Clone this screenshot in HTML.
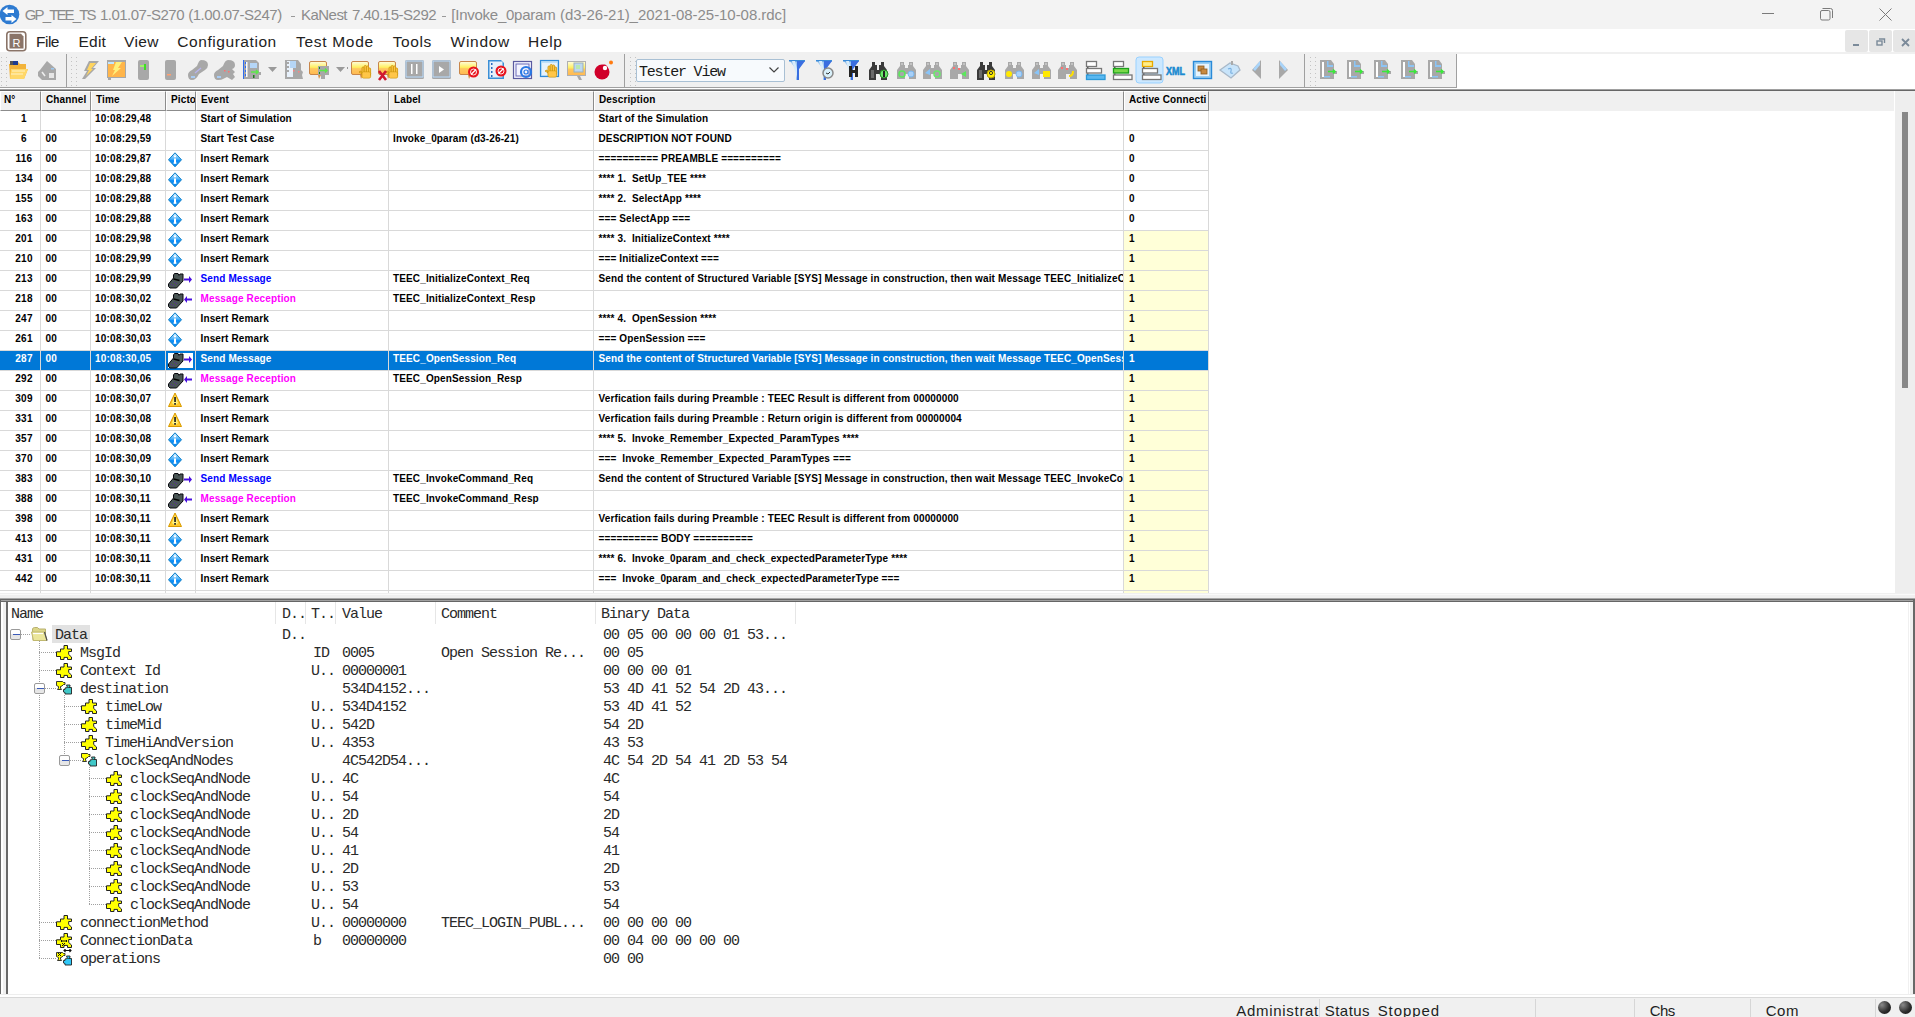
<!DOCTYPE html><html><head><meta charset="utf-8"><style>
*{box-sizing:border-box;margin:0;padding:0}
html,body{width:1915px;height:1017px;overflow:hidden;background:#fff}
body{position:relative;font-family:"Liberation Sans",sans-serif}
.a{position:absolute}
.t{position:absolute;white-space:pre;line-height:1}
.tb{font-weight:bold;font-size:10px;color:#000}
.tm{letter-spacing:0.22px}
.ls{letter-spacing:0.13px}
.mono{position:absolute;white-space:pre;line-height:1;font-family:"Liberation Mono",monospace;font-size:15px;letter-spacing:-1px;color:#2a2a2a}
</style></head><body>
<div class="a" style="left:0;top:0;width:1915px;height:29px;background:#f3f3f3"></div>
<svg class="a" style="left:0;top:4px" width="20" height="21" viewBox="0 0 20 21"><circle cx="9.5" cy="10.5" r="9.8" fill="#2e7bd1"/><path d="M2.5 7 L7.5 3 V5.5 H14 V9 H7.5 V11 Z" fill="#fff"/><path d="M16.5 15 L11.5 19 V16.5 H5.5 V13 H11.5 V11 Z" fill="#fff"/></svg>
<div class="t" style="left:24.7px;top:7.3px;font-size:15px;letter-spacing:-1.856px;color:#8c8c8c">GP_TEE_TS</div>
<div class="t" style="left:99.9px;top:7.3px;font-size:15px;letter-spacing:-0.498px;color:#8c8c8c">1.01.07-S270</div>
<div class="t" style="left:188.2px;top:7.3px;font-size:15px;letter-spacing:-0.470px;color:#8c8c8c">(1.00.07-S247)</div>
<div class="a" style="left:291.4px;top:16px;width:4px;height:1px;background:#999"></div>
<div class="t" style="left:301.1px;top:7.3px;font-size:15px;letter-spacing:-0.551px;color:#8c8c8c">KaNest</div>
<div class="t" style="left:351.9px;top:7.3px;font-size:15px;letter-spacing:-0.482px;color:#8c8c8c">7.40.15-S292</div>
<div class="a" style="left:442.3px;top:16px;width:4px;height:1px;background:#999"></div>
<div class="t" style="left:451.3px;top:7.3px;font-size:15px;letter-spacing:-0.248px;color:#8c8c8c">[Invoke_0param</div>
<div class="t" style="left:560.1px;top:7.3px;font-size:15px;letter-spacing:-0.051px;color:#8c8c8c">(d3-26-21)_2021-08-25-10-08.rdc]</div>
<div class="a" style="left:1762px;top:13px;width:12px;height:1px;background:#7a7a7a"></div>
<svg class="a" style="left:1819px;top:7px" width="15" height="15" viewBox="0 0 15 15"><rect x="1.5" y="3.5" width="9.5" height="9.5" rx="1.5" fill="none" stroke="#7a7a7a" stroke-width="1"/><path d="M3.5 1.5 H11.5 Q13.5 1.5 13.5 3.5 V11" fill="none" stroke="#7a7a7a" stroke-width="1"/></svg>
<svg class="a" style="left:1878px;top:7px" width="15" height="15" viewBox="0 0 15 15"><path d="M1.5 1.5 L13.5 13.5 M13.5 1.5 L1.5 13.5" stroke="#7a7a7a" stroke-width="1"/></svg>
<div class="a" style="left:0;top:29px;width:1915px;height:23px;background:#fff"></div>
<svg class="a" style="left:6px;top:31px" width="21" height="21" viewBox="0 0 21 21"><rect x="0.8" y="0.8" width="19" height="19" rx="3" fill="#fff" stroke="#8a7468" stroke-width="1.6"/><path d="M3.5 2.8 H15 L17.5 5.5 V17.5 H3.5 Z" fill="#8a7468"/><text x="10.5" y="15.5" font-family="Liberation Sans" font-size="11" fill="#fff" text-anchor="middle">R</text></svg>
<div class="t" style="left:36px;top:33.5px;font-size:15.5px;letter-spacing:-0.496px;color:#222">File</div>
<div class="t" style="left:78.6px;top:33.5px;font-size:15.5px;letter-spacing:0.170px;color:#222">Edit</div>
<div class="t" style="left:124px;top:33.5px;font-size:15.5px;letter-spacing:0.368px;color:#222">View</div>
<div class="t" style="left:177.3px;top:33.5px;font-size:15.5px;letter-spacing:0.561px;color:#222">Configuration</div>
<div class="t" style="left:296px;top:33.5px;font-size:15.5px;letter-spacing:0.698px;color:#222">Test Mode</div>
<div class="t" style="left:392.7px;top:33.5px;font-size:15.5px;letter-spacing:0.583px;color:#222">Tools</div>
<div class="t" style="left:450.6px;top:33.5px;font-size:15.5px;letter-spacing:0.710px;color:#222">Window</div>
<div class="t" style="left:528px;top:33.5px;font-size:15.5px;letter-spacing:0.702px;color:#222">Help</div>
<div class="a" style="left:1845px;top:30px;width:23px;height:22px;background:#e6e6e6;border-radius:2px"></div>
<div class="a" style="left:1869px;top:30px;width:23px;height:22px;background:#e6e6e6;border-radius:2px"></div>
<div class="a" style="left:1893px;top:30px;width:23px;height:22px;background:#e6e6e6;border-radius:2px"></div>
<div class="a" style="left:1853px;top:44px;width:6px;height:2px;background:#7b8a99"></div>
<svg class="a" style="left:1876px;top:37px" width="10" height="10" viewBox="0 0 10 10"><rect x="1" y="4" width="5" height="4" fill="none" stroke="#7b8a99" stroke-width="1.4"/><path d="M3 2 H8.5 V6" fill="none" stroke="#7b8a99" stroke-width="1.4"/></svg>
<svg class="a" style="left:1901px;top:38px" width="9" height="9" viewBox="0 0 9 9"><path d="M1 1 L8 8 M8 1 L1 8" stroke="#7b8a99" stroke-width="1.8"/></svg>
<div class="a" style="left:0;top:52px;width:1915px;height:2px;background:#f0f0f0"></div>
<div class="a" style="left:0;top:54px;width:1457px;height:34px;background:#f0f0f0;border-bottom:1px solid #a0a0a0"></div>
<div class="a" style="left:1456px;top:54px;width:1px;height:33px;background:#a0a0a0"></div>
<div class="a" style="left:66px;top:54px;width:1px;height:33px;background:#a0a0a0"></div>
<div class="a" style="left:624px;top:54px;width:1px;height:33px;background:#a0a0a0"></div>
<div class="a" style="left:1304px;top:54px;width:1px;height:33px;background:#a0a0a0"></div>
<div class="a" style="left:0px;top:56px;width:2px;height:30px;background:repeating-linear-gradient(transparent 0 1px,#c4c4c4 1px 2px,transparent 2px 4px);clip-path:inset(0 0 0 1px)"></div>
<div class="a" style="left:5px;top:56px;width:2px;height:30px;background:repeating-linear-gradient(transparent 0 1px,#c4c4c4 1px 2px,transparent 2px 4px);clip-path:inset(0 0 0 1px)"></div>
<div class="a" style="left:70px;top:56px;width:2px;height:30px;background:repeating-linear-gradient(transparent 0 1px,#c4c4c4 1px 2px,transparent 2px 4px);clip-path:inset(0 0 0 1px)"></div>
<div class="a" style="left:75px;top:56px;width:2px;height:30px;background:repeating-linear-gradient(transparent 0 1px,#c4c4c4 1px 2px,transparent 2px 4px);clip-path:inset(0 0 0 1px)"></div>
<div class="a" style="left:629px;top:56px;width:2px;height:30px;background:repeating-linear-gradient(transparent 0 1px,#c4c4c4 1px 2px,transparent 2px 4px);clip-path:inset(0 0 0 1px)"></div>
<div class="a" style="left:634px;top:56px;width:2px;height:30px;background:repeating-linear-gradient(transparent 0 1px,#c4c4c4 1px 2px,transparent 2px 4px);clip-path:inset(0 0 0 1px)"></div>
<div class="a" style="left:1309px;top:56px;width:2px;height:30px;background:repeating-linear-gradient(transparent 0 1px,#c4c4c4 1px 2px,transparent 2px 4px);clip-path:inset(0 0 0 1px)"></div>
<div class="a" style="left:1314px;top:56px;width:2px;height:30px;background:repeating-linear-gradient(transparent 0 1px,#c4c4c4 1px 2px,transparent 2px 4px);clip-path:inset(0 0 0 1px)"></div>
<svg class="a" style="left:0;top:0" width="1460" height="90" viewBox="0 0 1460 90"><defs><linearGradient id="ygrad" x1="0" y1="0" x2="0" y2="1"><stop offset="0" stop-color="#fffde0"/><stop offset="0.45" stop-color="#fff060"/><stop offset="0.55" stop-color="#ffc860"/><stop offset="1" stop-color="#ffb850"/></linearGradient></defs><g transform="translate(9,60)"><path d="M0 4 H3 V2 H9 L11 4 H17 V9 H19 L15 19 H1 Z" fill="#f2b33a"/>
<path d="M2 9 H19 L15 19 H1 Z" fill="#ffd86a"/><rect x="1" y="1" width="3" height="4" fill="#555"/><rect x="4" y="1" width="5" height="4" fill="#1d3b8f"/>
<path d="M3 11 H16 M2 14 H14" stroke="#ffe9a8" stroke-width="1.5"/></g><g transform="translate(37,60)"><path d="M10 1 L19 9 V20 H5 L1 16 V12 L3 10 Z" fill="#a8a8a8"/><rect x="12" y="13" width="5" height="5" fill="#e6e6e6"/><path d="M5 12 L8 16" stroke="#eee" stroke-width="1.5"/><rect x="14" y="8" width="3" height="1.5" fill="#9cc8f0"/></g><g transform="translate(81,60)"><path d="M8 1 H18 L12 8 H15 L4 19 H1 L6 11 H3 Z" fill="#a8a8a8"/><path d="M9 3 H15 L10 9 H12 L5 16 L8 10 H6 Z" fill="#ffd45e"/></g><g transform="translate(107,60)"><rect x="0" y="0" width="19" height="18" fill="#a8a8a8"/><rect x="1" y="2" width="17" height="15" fill="#ffb54a"/><rect x="1" y="2" width="6" height="2" fill="#bfe6ff"/><path d="M9 2 H15 L11 8 H14 L5 16 L8 10 H6 Z" fill="#fff07a"/><rect x="1" y="18" width="3" height="2" fill="#a8a8a8"/></g><g transform="translate(138,60)"><rect x="0" y="0" width="11" height="20" rx="2" fill="#a8a8a8"/><rect x="2" y="5" width="4" height="2" fill="#9ef26a"/><rect x="6" y="4" width="2" height="6" fill="#3fdc24"/></g><g transform="translate(165,60)"><rect x="0" y="0" width="11" height="20" rx="2" fill="#a8a8a8"/><rect x="2" y="14" width="4" height="1.5" fill="#ff9e6e"/></g><g transform="translate(188,60)"><path d="M13 0 Q20 0 20 5 Q20 8 17 10 L11 14 Q8 20 4 20 Q0 20 0 15 Q0 12 4 10 L9 6 Q11 0 13 0 Z" fill="#a8a8a8"/><path d="M7 13 L13 8" stroke="#b8b4ee" stroke-width="1.3"/><rect x="3" y="16" width="4" height="2" fill="#a8ccf4"/></g><g transform="translate(214,60)"><path d="M14 0 Q21 0 21 5 Q21 8 18 9 L21 12 L19 14 L21 17 L18 20 L13 17 L9 19 Q8 20 4 20 Q0 20 0 15 Q0 12 4 10 L9 6 Q11 0 14 0 Z" fill="#a8a8a8"/><rect x="3" y="16" width="4" height="2" fill="#a8ccf4"/><rect x="10" y="10" width="1.5" height="1.5" fill="#ff7070"/><rect x="14" y="11" width="1.5" height="1.5" fill="#ff7070"/></g><g transform="translate(243,60)"><path d="M0 0 H13 L16 3 V19 H0 Z" fill="#a8a8a8"/><rect x="0" y="0" width="1" height="19" fill="#2f6cf0"/><rect x="3" y="2" width="1.5" height="15" fill="#fff"/><rect x="2" y="2" width="1" height="2" fill="#2f6cf0"/><rect x="2" y="6" width="1" height="2" fill="#2f6cf0"/><rect x="2" y="10" width="1" height="2" fill="#2f6cf0"/><rect x="2" y="14" width="1" height="2" fill="#2f6cf0"/><rect x="7" y="3" width="7" height="5" fill="#b5d6f7"/><path d="M8 12 H15 M13 10 L15 12 L13 14" stroke="#5ce84a" stroke-width="1.6" fill="none"/><rect x="16" y="12" width="2" height="3" fill="#a8a8a8"/><rect x="10" y="15" width="1.5" height="3" fill="#1a7a1a"/></g><g transform="translate(268,67)"><path d="M0 0 H9 L4.5 5 Z" fill="#9a9a9a"/></g><g transform="translate(285,60)"><path d="M0 0 H13 L16 4 V10 L18 12 L17 15 L18 19 H0 Z" fill="#a8a8a8"/><rect x="2" y="1" width="6" height="16" fill="#e8f1fb"/><rect x="2" y="2" width="2" height="2" fill="#a8a8a8"/><rect x="2" y="6" width="2" height="2" fill="#a8a8a8"/><rect x="2" y="10" width="2" height="2" fill="#a8a8a8"/><rect x="5" y="1" width="6" height="7" fill="#b5d6f7"/><rect x="8" y="10" width="1.5" height="1.5" fill="#ff8080"/><rect x="13" y="11" width="1.5" height="1.5" fill="#ff8080"/></g><g transform="translate(309,61)"><rect x="0.5" y="0.5" width="17" height="13" rx="1.5" fill="url(#ygrad)" stroke="#c8864a" stroke-width="1"/><path d="M9 14 L10 18 L12 14 Z" fill="#d8924a"/><rect x="9" y="5" width="11" height="9" fill="#a8a8a8"/><path d="M11 9.5 H18 M16 7.5 L18 9.5 L16 11.5" stroke="#5ce84a" stroke-width="1.4" fill="none"/><rect x="10" y="6" width="1" height="2" fill="#1a8a1a"/><rect x="10" y="11" width="1" height="2" fill="#1a8a1a"/><rect x="12" y="14" width="4" height="4" fill="#a8a8a8"/></g><g transform="translate(336,67)"><path d="M0 0 H9 L4.5 5 Z" fill="#9a9a9a"/></g><rect x="347" y="67" width="1" height="2" fill="#999"/><g transform="translate(351,61)"><rect x="0.5" y="0.5" width="17" height="13" rx="1.5" fill="url(#ygrad)" stroke="#c8864a" stroke-width="1"/><path d="M9 14 L10 18 L12 14 Z" fill="#d8924a"/><g stroke="#d09a10" stroke-width="0.9" fill="#ffc648"><path d="M8 11 L10 10 L11.5 13 Z"/><rect x="11" y="6" width="2.2" height="8" rx="1"/><rect x="13.2" y="4.5" width="2.2" height="9" rx="1"/><rect x="15.4" y="5" width="2.2" height="9" rx="1"/><rect x="17.6" y="7" width="2" height="7" rx="1"/><rect x="11" y="11" width="8.6" height="6" rx="1.5"/></g><rect x="11.8" y="11.5" width="7" height="5" fill="#ffc648"/></g><g transform="translate(378,61)"><rect x="0.5" y="0.5" width="17" height="13" rx="1.5" fill="url(#ygrad)" stroke="#c8864a" stroke-width="1"/><path d="M9 14 L10 18 L12 14 Z" fill="#d8924a"/><g stroke="#d09a10" stroke-width="0.9" fill="#ffc648"><path d="M8 11 L10 10 L11.5 13 Z"/><rect x="11" y="6" width="2.2" height="8" rx="1"/><rect x="13.2" y="4.5" width="2.2" height="9" rx="1"/><rect x="15.4" y="5" width="2.2" height="9" rx="1"/><rect x="17.6" y="7" width="2" height="7" rx="1"/><rect x="11" y="11" width="8.6" height="6" rx="1.5"/></g><rect x="11.8" y="11.5" width="7" height="5" fill="#ffc648"/><path d="M1 10 L8 19 M8 10 L1 19" stroke="#d01830" stroke-width="2.6"/></g><g transform="translate(405,60)"><rect x="0" y="0" width="19" height="19" rx="1.5" fill="#a8a8a8"/><rect x="1" y="1" width="17" height="16" fill="none" stroke="#b8dcff" stroke-width="1"/><rect x="6" y="4" width="1.5" height="10" fill="#fff"/><rect x="11" y="4" width="1.5" height="10" fill="#fff"/></g><g transform="translate(432,60)"><rect x="0" y="0" width="19" height="19" rx="1.5" fill="#a8a8a8"/><rect x="1" y="1" width="17" height="16" fill="none" stroke="#b8dcff" stroke-width="1"/><path d="M7 6 L12 9.5 L7 13 Z" fill="#fff"/></g><g transform="translate(459,61)"><rect x="0.5" y="0.5" width="17" height="13" rx="1.5" fill="url(#ygrad)" stroke="#c8864a" stroke-width="1"/><path d="M9 14 L10 18 L12 14 Z" fill="#d8924a"/><circle cx="14.5" cy="11" r="5.5" fill="#e8141e"/><path d="M12.0 13.5 L17.0 8.5" stroke="#fff" stroke-width="1.2"/><circle cx="14.5" cy="11" r="3" fill="none" stroke="#fff" stroke-width="0.9"/></g><g transform="translate(488,60)"><path d="M0 0 H13 L16 3 V19 H0 Z" fill="#3a8fd6"/><rect x="1.5" y="1.5" width="13" height="16" fill="#e4f0fb"/><rect x="3" y="3" width="1.5" height="2" fill="#2a6cc0"/><rect x="3" y="7" width="1.5" height="2" fill="#2a6cc0"/><rect x="3" y="11" width="1.5" height="2" fill="#2a6cc0"/><rect x="3" y="15" width="1.5" height="2" fill="#2a6cc0"/><circle cx="13" cy="11" r="5.5" fill="#e8141e"/><path d="M10.5 13.5 L15.5 8.5" stroke="#fff" stroke-width="1.2"/><circle cx="13" cy="11" r="3" fill="none" stroke="#fff" stroke-width="0.9"/></g><g transform="translate(513,60)"><rect x="0.5" y="1.5" width="18" height="17" fill="#f4f4ff" stroke="#5a5aa0" stroke-width="1.2"/><rect x="3" y="4" width="13" height="12" fill="none" stroke="#6a6ab8" stroke-width="1"/><circle cx="13" cy="12" r="5" fill="none" stroke="#2a78e4" stroke-width="2.2"/><circle cx="13" cy="12" r="2" fill="none" stroke="#2a78e4" stroke-width="1.2"/></g><g transform="translate(540,60)"><rect x="0.5" y="0.5" width="18" height="16" fill="#bfe0f8" stroke="#2f8ad8" stroke-width="1.2"/><rect x="2" y="3" width="15" height="12" fill="#e6f2fb"/><g stroke="#d09a10" stroke-width="0.9" fill="#ffc648"><path d="M5 11 L7 10 L8.5 13 Z"/><rect x="8" y="6" width="2.2" height="8" rx="1"/><rect x="10.2" y="4.5" width="2.2" height="9" rx="1"/><rect x="12.4" y="5" width="2.2" height="9" rx="1"/><rect x="14.6" y="7" width="2" height="7" rx="1"/><rect x="8" y="11" width="8.6" height="6" rx="1.5"/></g><rect x="8.8" y="11.5" width="7" height="5" fill="#ffc648"/></g><g transform="translate(567,61)"><rect x="0.5" y="0.5" width="18" height="14" fill="url(#ygrad)" stroke="#b0b0b0" stroke-width="1"/><rect x="7" y="2" width="9" height="9" fill="#bcd8f0" stroke="#9ab0c0" stroke-width="1"/><rect x="9" y="4" width="4" height="4" fill="#b8e8b0"/><path d="M10 15 L12 19 H15 L13 15 Z" fill="#a8a8a8"/></g><g transform="translate(594,60)"><circle cx="8" cy="12" r="7.5" fill="#d0002a"/><path d="M8 5 Q13 3 14 9" fill="#d0002a"/><circle cx="11" cy="8" r="2.2" fill="#fff"/><circle cx="17" cy="2.5" r="2" fill="#ff7a10"/></g><g transform="translate(789,60)"><path d="M0 0 H16 L10 9 V20 L7 20 V9 Z" fill="#9cc7f0"/><path d="M0 0 H16 V1.5 H0 Z" fill="#3a8ad8"/><path d="M8 1 H16 L10 9 V20 H8 Z" fill="#3a6ee0"/><path d="M3 1 H6 L8 9 V18 Z" fill="#d8ecfa"/></g><g transform="translate(816,60)"><path d="M0 0 H16 L10 9 V20 L7 20 V9 Z" fill="#9cc7f0"/><path d="M0 0 H16 V1.5 H0 Z" fill="#3a8ad8"/><path d="M8 1 H16 L10 9 V20 H8 Z" fill="#3a6ee0"/><path d="M3 1 H6 L8 9 V18 Z" fill="#d8ecfa"/><circle cx="12" cy="13" r="5" fill="#d8f0fa" stroke="#888" stroke-width="1.5"/><path d="M10 13 L12 14 L14 12" stroke="#333" stroke-width="1" fill="none"/></g><g transform="translate(843,60)"><path d="M0 0 H16 L10 9 V20 L7 20 V9 Z" fill="#9cc7f0"/><path d="M0 0 H16 V1.5 H0 Z" fill="#3a8ad8"/><path d="M8 1 H16 L10 9 V20 H8 Z" fill="#3a6ee0"/><path d="M3 1 H6 L8 9 V18 Z" fill="#d8ecfa"/><path d="M6 6 H9 V10 H12 V6 H15 V17 H12 V13 H9 V17 H6 Z" fill="#222"/></g><g transform="translate(869,62)"><path d="M3 0 H6 V3 H8 V8 H10 V3 H12 V0 H15 V4 L18 8 V18 H12 V12 H7 V18 H0 V8 L3 4 Z" fill="#3a3a3a"/><path d="M2 8 H5 V16 H2 Z" fill="#6a6a6a"/><path d="M13 8 H16 V14 H13 Z" fill="#707070"/><circle cx="15" cy="12" r="4" fill="#6ae86a" stroke="#2a8a2a" stroke-width="1"/><rect x="14" y="9" width="2" height="6" fill="#222"/></g><g transform="translate(897,62)"><path d="M3 0 H7 V3 H8 V6 H11 V3 H12 V0 H16 V4 L19 8 V17 H12 V12 H8 V17 H0 V8 L3 4 Z" fill="#a8a8a8"/><rect x="4" y="1.5" width="2" height="1" fill="#ddd"/><rect x="13" y="1.5" width="2" height="1" fill="#ddd"/><circle cx="5" cy="12" r="3" fill="none" stroke="#5ae85a" stroke-width="1.5"/><circle cx="14" cy="12" r="3" fill="#a8d0f8" stroke="#7ab8f0" stroke-width="1"/></g><g transform="translate(923,62)"><path d="M3 0 H7 V3 H8 V6 H11 V3 H12 V0 H16 V4 L19 8 V17 H12 V12 H8 V17 H0 V8 L3 4 Z" fill="#a8a8a8"/><rect x="4" y="1.5" width="2" height="1" fill="#ddd"/><rect x="13" y="1.5" width="2" height="1" fill="#ddd"/><path d="M2 11 L7 7 V13 Z" fill="#88c4f8"/><circle cx="14" cy="12" r="3" fill="none" stroke="#6ae86a" stroke-width="1.5"/></g><g transform="translate(950,62)"><path d="M3 0 H7 V3 H8 V6 H11 V3 H12 V0 H16 V4 L19 8 V17 H12 V12 H8 V17 H0 V8 L3 4 Z" fill="#a8a8a8"/><rect x="4" y="1.5" width="2" height="1" fill="#ddd"/><rect x="13" y="1.5" width="2" height="1" fill="#ddd"/><rect x="3" y="5" width="2" height="2" fill="#ff7070"/><rect x="8" y="6" width="2" height="2" fill="#ff7070"/><path d="M11 12 L16 9 V15 Z" fill="#5ae85a"/></g><g transform="translate(977,62)"><path d="M3 0 H6 V3 H8 V8 H10 V3 H12 V0 H15 V4 L18 8 V18 H12 V12 H7 V18 H0 V8 L3 4 Z" fill="#3a3a3a"/><path d="M2 8 H5 V16 H2 Z" fill="#6a6a6a"/><path d="M13 8 H16 V14 H13 Z" fill="#707070"/><circle cx="14" cy="12" r="4" fill="#ffee00" stroke="#b8a000" stroke-width="1"/><circle cx="14" cy="11" r="1.6" fill="none" stroke="#333" stroke-width="1"/></g><g transform="translate(1005,62)"><path d="M3 0 H7 V3 H8 V6 H11 V3 H12 V0 H16 V4 L19 8 V17 H12 V12 H8 V17 H0 V8 L3 4 Z" fill="#a8a8a8"/><rect x="4" y="1.5" width="2" height="1" fill="#ddd"/><rect x="13" y="1.5" width="2" height="1" fill="#ddd"/><circle cx="4" cy="12" r="3" fill="#ffe800"/><circle cx="14" cy="12" r="3" fill="#a8d0f8" stroke="#7ab8f0" stroke-width="1"/></g><g transform="translate(1032,62)"><path d="M3 0 H7 V3 H8 V6 H11 V3 H12 V0 H16 V4 L19 8 V17 H12 V12 H8 V17 H0 V8 L3 4 Z" fill="#a8a8a8"/><rect x="4" y="1.5" width="2" height="1" fill="#ddd"/><rect x="13" y="1.5" width="2" height="1" fill="#ddd"/><path d="M2 11 L7 7 V13 Z" fill="#88c4f8"/><rect x="11" y="9" width="7" height="6" fill="#ffe800"/></g><g transform="translate(1058,62)"><path d="M3 0 H7 V3 H8 V6 H11 V3 H12 V0 H16 V4 L19 8 V17 H12 V12 H8 V17 H0 V8 L3 4 Z" fill="#a8a8a8"/><rect x="4" y="1.5" width="2" height="1" fill="#ddd"/><rect x="13" y="1.5" width="2" height="1" fill="#ddd"/><rect x="3" y="5" width="2" height="2" fill="#ff7070"/><rect x="8" y="6" width="2" height="2" fill="#ff7070"/><path d="M11 14 Q15 14 15 9" stroke="#ffe000" stroke-width="2" fill="none"/></g><g transform="translate(1086,61)"><rect x="0.5" y="0.5" width="10" height="5" fill="#fff" stroke="#777" stroke-width="1.3"/><rect x="1" y="6" width="1.5" height="2" fill="#555"/><rect x="0.5" y="7.5" width="15" height="4.5" fill="#fff" stroke="#777" stroke-width="1.3"/><rect x="1" y="12.5" width="1.5" height="2" fill="#555"/><rect x="0.5" y="14" width="18.5" height="4.5" fill="#5ab8f0" stroke="#2a98d8" stroke-width="1.3"/></g><g transform="translate(1113,61)"><rect x="0.5" y="0.5" width="10" height="5" fill="#fff" stroke="#777" stroke-width="1.3"/><rect x="1" y="6" width="1.5" height="2" fill="#555"/><rect x="0.5" y="7.5" width="15" height="4.5" fill="#7ad84a" stroke="#1aa01a" stroke-width="1.3"/><rect x="1" y="12.5" width="1.5" height="2" fill="#555"/><rect x="0.5" y="14" width="18.5" height="4.5" fill="#fff" stroke="#777" stroke-width="1.3"/></g><g transform="translate(1142,61)"><rect x="-6" y="-4" width="27" height="26" rx="3" fill="#cce8ff" stroke="#99d1ff" stroke-width="1"/><rect x="0.5" y="0.5" width="10" height="5" fill="#ffee88" stroke="#e8a800" stroke-width="1.3"/><rect x="1" y="6" width="1.5" height="2" fill="#555"/><rect x="0.5" y="7.5" width="15" height="4.5" fill="#fff" stroke="#777" stroke-width="1.3"/><rect x="1" y="12.5" width="1.5" height="2" fill="#555"/><rect x="0.5" y="14" width="18.5" height="4.5" fill="#fff" stroke="#777" stroke-width="1.3"/></g><g transform="translate(1166,66)"><text x="0" y="8.5" font-family="Liberation Sans" font-weight="bold" font-size="11.5" fill="#1a8ad0" stroke="#1a8ad0" stroke-width="0.6" textLength="19" lengthAdjust="spacingAndGlyphs">XML</text></g><g transform="translate(1193,61)"><rect x="0.5" y="0.5" width="18" height="17" fill="#9cd0f4" stroke="#2a8ad8" stroke-width="1.4"/><rect x="3" y="3" width="13" height="12" fill="#e8f4fc"/><rect x="5" y="5" width="6" height="5" fill="#c88a40" stroke="#8a5a20" stroke-width="0.8"/><rect x="8" y="8" width="6" height="5" fill="#c88a40" stroke="#8a5a20" stroke-width="0.8"/></g><g transform="translate(1220,61)"><path d="M0 9 L10 2 L18 5 L20 9 L11 17 Z" fill="#c8e4fa" stroke="#a8b8c8" stroke-width="1.3"/><path d="M12 0 V4" stroke="#aaa" stroke-width="2"/><path d="M8 8 Q12 6 11 10 Q10 13 13 12" stroke="#7ab0e0" stroke-width="1.2" fill="none"/></g><g transform="translate(1252,60)"><path d="M9 0 V19 L0 10 Z" fill="#a8a8a8"/><path d="M8 1 L1 9 L3 11 L8 5 Z" fill="#a8d4fa"/></g><g transform="translate(1279,60)"><path d="M0 0 V19 L9 10 Z" fill="#a8a8a8"/><path d="M1 1 L8 9 L6 11 L1 5 Z" fill="#a8d4fa"/></g><g transform="translate(1320,60)"><path d="M0 0 H11 L14 4 V11 H17 V14 H14 V19 H0 Z" fill="#a8a8a8"/><rect x="2" y="2" width="2" height="15" fill="#fff"/><rect x="7" y="1" width="1.5" height="6" fill="#8cc4f4"/><rect x="8" y="5" width="5" height="2" fill="#8cc4f4"/><rect x="4" y="16" width="6" height="1.5" fill="#8cc4f4"/><path d="M8 11.5 H15 M13 9.5 L15 11.5 L13 13.5" stroke="#3ae83a" stroke-width="1.6" fill="none"/></g><g transform="translate(1347,60)"><path d="M0 0 H11 L14 4 V11 H17 V14 H14 V19 H0 Z" fill="#a8a8a8"/><rect x="2" y="2" width="2" height="15" fill="#fff"/><rect x="7" y="1" width="1.5" height="6" fill="#8cc4f4"/><rect x="8" y="5" width="5" height="2" fill="#8cc4f4"/><rect x="4" y="16" width="6" height="1.5" fill="#8cc4f4"/><path d="M8 11.5 H15 M13 9.5 L15 11.5 L13 13.5" stroke="#3ae83a" stroke-width="1.6" fill="none"/></g><g transform="translate(1374,60)"><path d="M0 0 H11 L14 4 V11 H17 V14 H14 V19 H0 Z" fill="#a8a8a8"/><rect x="2" y="2" width="2" height="15" fill="#fff"/><rect x="7" y="1" width="1.5" height="6" fill="#8cc4f4"/><rect x="8" y="5" width="5" height="2" fill="#8cc4f4"/><rect x="4" y="16" width="6" height="1.5" fill="#8cc4f4"/><path d="M8 11.5 H15 M13 9.5 L15 11.5 L13 13.5" stroke="#3ae83a" stroke-width="1.6" fill="none"/></g><g transform="translate(1401,60)"><path d="M0 0 H11 L14 4 V11 H17 V14 H14 V19 H0 Z" fill="#a8a8a8"/><rect x="2" y="2" width="2" height="15" fill="#fff"/><rect x="7" y="1" width="1.5" height="6" fill="#8cc4f4"/><rect x="8" y="5" width="5" height="2" fill="#8cc4f4"/><rect x="4" y="16" width="6" height="1.5" fill="#8cc4f4"/><path d="M8 11.5 H15 M13 9.5 L15 11.5 L13 13.5" stroke="#3ae83a" stroke-width="1.6" fill="none"/></g><g transform="translate(1428,60)"><path d="M0 0 H11 L14 4 V11 H17 V14 H14 V19 H0 Z" fill="#a8a8a8"/><rect x="2" y="2" width="2" height="15" fill="#fff"/><rect x="7" y="1" width="1.5" height="6" fill="#8cc4f4"/><rect x="8" y="5" width="5" height="2" fill="#8cc4f4"/><rect x="4" y="16" width="6" height="1.5" fill="#8cc4f4"/><path d="M8 11.5 H15 M13 9.5 L15 11.5 L13 13.5" stroke="#3ae83a" stroke-width="1.6" fill="none"/></g></svg>
<div class="a" style="left:636px;top:59px;width:149px;height:23px;background:#f7fafd;border:1px solid #a9c0d4;border-radius:2px"></div>
<div class="t" style="left:639px;top:64.5px;font-family:'Liberation Mono';font-size:15px;letter-spacing:-1.2px;color:#1a1a1a">Tester View</div>
<svg class="a" style="left:768px;top:66px" width="12" height="8" viewBox="0 0 12 8"><path d="M1.5 1.5 L6 6 L10.5 1.5" fill="none" stroke="#444" stroke-width="1.2"/></svg>
<div class="a" style="left:0;top:88px;width:1915px;height:1px;background:#fff"></div>
<div class="a" style="left:0;top:89px;width:1915px;height:1px;background:#a0a0a0"></div>
<div class="a" style="left:0;top:90px;width:1915px;height:1px;background:#666"></div>
<div class="a" style="left:0;top:91px;width:1894px;height:20px;background:#f0f0f0"></div>
<div class="a" style="left:0px;top:91px;width:41px;height:20px;background:#f0f0f0;border-top:1px solid #fff;border-left:1px solid #fff;border-right:1px solid #8c8c8c;border-bottom:1px solid #8c8c8c;overflow:hidden"><div class="t tb ls" style="left:3px;top:3px">N°</div></div>
<div class="a" style="left:41px;top:91px;width:50px;height:20px;background:#f0f0f0;border-top:1px solid #fff;border-left:1px solid #fff;border-right:1px solid #8c8c8c;border-bottom:1px solid #8c8c8c;overflow:hidden"><div class="t tb ls" style="left:4px;top:3px">Channel</div></div>
<div class="a" style="left:91px;top:91px;width:75px;height:20px;background:#f0f0f0;border-top:1px solid #fff;border-left:1px solid #fff;border-right:1px solid #8c8c8c;border-bottom:1px solid #8c8c8c;overflow:hidden"><div class="t tb ls" style="left:4px;top:3px">Time</div></div>
<div class="a" style="left:166px;top:91px;width:30px;height:20px;background:#f0f0f0;border-top:1px solid #fff;border-left:1px solid #fff;border-right:1px solid #8c8c8c;border-bottom:1px solid #8c8c8c;overflow:hidden"><div class="t tb ls" style="left:4px;top:3px">Picto</div></div>
<div class="a" style="left:196px;top:91px;width:193px;height:20px;background:#f0f0f0;border-top:1px solid #fff;border-left:1px solid #fff;border-right:1px solid #8c8c8c;border-bottom:1px solid #8c8c8c;overflow:hidden"><div class="t tb ls" style="left:4px;top:3px">Event</div></div>
<div class="a" style="left:389px;top:91px;width:205px;height:20px;background:#f0f0f0;border-top:1px solid #fff;border-left:1px solid #fff;border-right:1px solid #8c8c8c;border-bottom:1px solid #8c8c8c;overflow:hidden"><div class="t tb ls" style="left:4px;top:3px">Label</div></div>
<div class="a" style="left:594px;top:91px;width:530px;height:20px;background:#f0f0f0;border-top:1px solid #fff;border-left:1px solid #fff;border-right:1px solid #8c8c8c;border-bottom:1px solid #8c8c8c;overflow:hidden"><div class="t tb ls" style="left:4px;top:3px">Description</div></div>
<div class="a" style="left:1124px;top:91px;width:85px;height:20px;background:#f0f0f0;border-top:1px solid #fff;border-left:1px solid #fff;border-right:1px solid #8c8c8c;border-bottom:1px solid #8c8c8c;overflow:hidden"><div class="t tb ls" style="left:4px;top:3px">Active Connecti</div></div>
<div class="a" style="left:1124px;top:231px;width:84px;height:19px;background:#ffffd8"></div>
<div class="a" style="left:1124px;top:251px;width:84px;height:19px;background:#ffffd8"></div>
<div class="a" style="left:1124px;top:271px;width:84px;height:19px;background:#ffffd8"></div>
<div class="a" style="left:1124px;top:291px;width:84px;height:19px;background:#ffffd8"></div>
<div class="a" style="left:1124px;top:311px;width:84px;height:19px;background:#ffffd8"></div>
<div class="a" style="left:1124px;top:331px;width:84px;height:19px;background:#ffffd8"></div>
<div class="a" style="left:1124px;top:371px;width:84px;height:19px;background:#ffffd8"></div>
<div class="a" style="left:1124px;top:391px;width:84px;height:19px;background:#ffffd8"></div>
<div class="a" style="left:1124px;top:411px;width:84px;height:19px;background:#ffffd8"></div>
<div class="a" style="left:1124px;top:431px;width:84px;height:19px;background:#ffffd8"></div>
<div class="a" style="left:1124px;top:451px;width:84px;height:19px;background:#ffffd8"></div>
<div class="a" style="left:1124px;top:471px;width:84px;height:19px;background:#ffffd8"></div>
<div class="a" style="left:1124px;top:491px;width:84px;height:19px;background:#ffffd8"></div>
<div class="a" style="left:1124px;top:511px;width:84px;height:19px;background:#ffffd8"></div>
<div class="a" style="left:1124px;top:531px;width:84px;height:19px;background:#ffffd8"></div>
<div class="a" style="left:1124px;top:551px;width:84px;height:19px;background:#ffffd8"></div>
<div class="a" style="left:1124px;top:571px;width:84px;height:19px;background:#ffffd8"></div>
<div class="a" style="left:1124px;top:591px;width:84px;height:2px;background:#ffffd8"></div>
<div class="a" style="left:0;top:130px;width:1209px;height:1px;background:#d9d9d9"></div>
<div class="a" style="left:0;top:150px;width:1209px;height:1px;background:#d9d9d9"></div>
<div class="a" style="left:0;top:170px;width:1209px;height:1px;background:#d9d9d9"></div>
<div class="a" style="left:0;top:190px;width:1209px;height:1px;background:#d9d9d9"></div>
<div class="a" style="left:0;top:210px;width:1209px;height:1px;background:#d9d9d9"></div>
<div class="a" style="left:0;top:230px;width:1209px;height:1px;background:#d9d9d9"></div>
<div class="a" style="left:0;top:250px;width:1209px;height:1px;background:#d9d9d9"></div>
<div class="a" style="left:0;top:270px;width:1209px;height:1px;background:#d9d9d9"></div>
<div class="a" style="left:0;top:290px;width:1209px;height:1px;background:#d9d9d9"></div>
<div class="a" style="left:0;top:310px;width:1209px;height:1px;background:#d9d9d9"></div>
<div class="a" style="left:0;top:330px;width:1209px;height:1px;background:#d9d9d9"></div>
<div class="a" style="left:0;top:350px;width:1209px;height:1px;background:#d9d9d9"></div>
<div class="a" style="left:0;top:370px;width:1209px;height:1px;background:#d9d9d9"></div>
<div class="a" style="left:0;top:390px;width:1209px;height:1px;background:#d9d9d9"></div>
<div class="a" style="left:0;top:410px;width:1209px;height:1px;background:#d9d9d9"></div>
<div class="a" style="left:0;top:430px;width:1209px;height:1px;background:#d9d9d9"></div>
<div class="a" style="left:0;top:450px;width:1209px;height:1px;background:#d9d9d9"></div>
<div class="a" style="left:0;top:470px;width:1209px;height:1px;background:#d9d9d9"></div>
<div class="a" style="left:0;top:490px;width:1209px;height:1px;background:#d9d9d9"></div>
<div class="a" style="left:0;top:510px;width:1209px;height:1px;background:#d9d9d9"></div>
<div class="a" style="left:0;top:530px;width:1209px;height:1px;background:#d9d9d9"></div>
<div class="a" style="left:0;top:550px;width:1209px;height:1px;background:#d9d9d9"></div>
<div class="a" style="left:0;top:570px;width:1209px;height:1px;background:#d9d9d9"></div>
<div class="a" style="left:0;top:590px;width:1209px;height:1px;background:#d9d9d9"></div>
<div class="a" style="left:40px;top:111px;width:1px;height:482px;background:#d9d9d9"></div>
<div class="a" style="left:90px;top:111px;width:1px;height:482px;background:#d9d9d9"></div>
<div class="a" style="left:165px;top:111px;width:1px;height:482px;background:#d9d9d9"></div>
<div class="a" style="left:195px;top:111px;width:1px;height:482px;background:#d9d9d9"></div>
<div class="a" style="left:388px;top:111px;width:1px;height:482px;background:#d9d9d9"></div>
<div class="a" style="left:593px;top:111px;width:1px;height:482px;background:#d9d9d9"></div>
<div class="a" style="left:1123px;top:111px;width:1px;height:482px;background:#d9d9d9"></div>
<div class="a" style="left:1208px;top:111px;width:1px;height:482px;background:#d9d9d9"></div>
<div class="a" style="left:0;top:351px;width:1208px;height:19px;background:#0078d7"></div>
<div class="a" style="left:40px;top:351px;width:1px;height:19px;background:#d9d9d9"></div>
<div class="a" style="left:90px;top:351px;width:1px;height:19px;background:#d9d9d9"></div>
<div class="a" style="left:165px;top:351px;width:1px;height:19px;background:#d9d9d9"></div>
<div class="a" style="left:195px;top:351px;width:1px;height:19px;background:#d9d9d9"></div>
<div class="a" style="left:388px;top:351px;width:1px;height:19px;background:#d9d9d9"></div>
<div class="a" style="left:593px;top:351px;width:1px;height:19px;background:#d9d9d9"></div>
<div class="a" style="left:1123px;top:351px;width:1px;height:19px;background:#d9d9d9"></div>
<div class="a" style="left:168px;top:353px;width:25px;height:15px;background:#fff"></div>
<div class="t tb tm" style="left:4px;width:40px;text-align:center;top:114px;color:#000">1</div>
<div class="t tb tm" style="left:95px;top:114px;color:#000">10:08:29,48</div>
<div class="t tb ls" style="left:200.5px;top:114px;color:#000">Start of Simulation</div>
<div class="a" style="left:594px;top:111px;width:529px;height:19px;overflow:hidden"><div class="t tb ls" style="left:4.5px;top:3px;color:#000">Start of the Simulation</div></div>
<div class="t tb tm" style="left:4px;width:40px;text-align:center;top:134px;color:#000">6</div>
<div class="t tb tm" style="left:45.5px;top:134px;color:#000">00</div>
<div class="t tb tm" style="left:95px;top:134px;color:#000">10:08:29,59</div>
<div class="t tb ls" style="left:200.5px;top:134px;color:#000">Start Test Case</div>
<div class="t tb ls" style="left:393px;top:134px;color:#000">Invoke_0param (d3-26-21)</div>
<div class="a" style="left:594px;top:131px;width:529px;height:19px;overflow:hidden"><div class="t tb ls" style="left:4.5px;top:3px;color:#000">DESCRIPTION NOT FOUND</div></div>
<div class="t tb tm" style="left:1129px;top:134px;color:#000">0</div>
<div class="t tb tm" style="left:4px;width:40px;text-align:center;top:154px;color:#000">116</div>
<div class="t tb tm" style="left:45.5px;top:154px;color:#000">00</div>
<div class="t tb tm" style="left:95px;top:154px;color:#000">10:08:29,87</div>
<svg class="a" style="left:167.5px;top:152px" width="15" height="16" viewBox="0 0 15 16"><defs><linearGradient id="ig" x1="0" y1="0" x2="0" y2="1"><stop offset="0" stop-color="#d8eeff"/><stop offset="0.45" stop-color="#4ab0fa"/><stop offset="0.55" stop-color="#1090f8"/><stop offset="1" stop-color="#0a8af0"/></linearGradient></defs><path d="M7 0.8 L13.5 7.8 L7 14.8 L0.5 7.8 Z" fill="url(#ig)" stroke="#0a7ec8" stroke-width="1"/><rect x="6" y="3.5" width="2" height="1.8" fill="#fff"/><rect x="6" y="6.5" width="2" height="5" fill="#fff"/><rect x="5.5" y="10.5" width="3" height="1.2" fill="#fff"/></svg>
<div class="t tb ls" style="left:200.5px;top:154px;color:#000">Insert Remark</div>
<div class="a" style="left:594px;top:151px;width:529px;height:19px;overflow:hidden"><div class="t tb ls" style="left:4.5px;top:3px;color:#000">========== PREAMBLE ==========</div></div>
<div class="t tb tm" style="left:1129px;top:154px;color:#000">0</div>
<div class="t tb tm" style="left:4px;width:40px;text-align:center;top:174px;color:#000">134</div>
<div class="t tb tm" style="left:45.5px;top:174px;color:#000">00</div>
<div class="t tb tm" style="left:95px;top:174px;color:#000">10:08:29,88</div>
<svg class="a" style="left:167.5px;top:172px" width="15" height="16" viewBox="0 0 15 16"><defs><linearGradient id="ig" x1="0" y1="0" x2="0" y2="1"><stop offset="0" stop-color="#d8eeff"/><stop offset="0.45" stop-color="#4ab0fa"/><stop offset="0.55" stop-color="#1090f8"/><stop offset="1" stop-color="#0a8af0"/></linearGradient></defs><path d="M7 0.8 L13.5 7.8 L7 14.8 L0.5 7.8 Z" fill="url(#ig)" stroke="#0a7ec8" stroke-width="1"/><rect x="6" y="3.5" width="2" height="1.8" fill="#fff"/><rect x="6" y="6.5" width="2" height="5" fill="#fff"/><rect x="5.5" y="10.5" width="3" height="1.2" fill="#fff"/></svg>
<div class="t tb ls" style="left:200.5px;top:174px;color:#000">Insert Remark</div>
<div class="a" style="left:594px;top:171px;width:529px;height:19px;overflow:hidden"><div class="t tb ls" style="left:4.5px;top:3px;color:#000">**** 1.  SetUp_TEE ****</div></div>
<div class="t tb tm" style="left:1129px;top:174px;color:#000">0</div>
<div class="t tb tm" style="left:4px;width:40px;text-align:center;top:194px;color:#000">155</div>
<div class="t tb tm" style="left:45.5px;top:194px;color:#000">00</div>
<div class="t tb tm" style="left:95px;top:194px;color:#000">10:08:29,88</div>
<svg class="a" style="left:167.5px;top:192px" width="15" height="16" viewBox="0 0 15 16"><defs><linearGradient id="ig" x1="0" y1="0" x2="0" y2="1"><stop offset="0" stop-color="#d8eeff"/><stop offset="0.45" stop-color="#4ab0fa"/><stop offset="0.55" stop-color="#1090f8"/><stop offset="1" stop-color="#0a8af0"/></linearGradient></defs><path d="M7 0.8 L13.5 7.8 L7 14.8 L0.5 7.8 Z" fill="url(#ig)" stroke="#0a7ec8" stroke-width="1"/><rect x="6" y="3.5" width="2" height="1.8" fill="#fff"/><rect x="6" y="6.5" width="2" height="5" fill="#fff"/><rect x="5.5" y="10.5" width="3" height="1.2" fill="#fff"/></svg>
<div class="t tb ls" style="left:200.5px;top:194px;color:#000">Insert Remark</div>
<div class="a" style="left:594px;top:191px;width:529px;height:19px;overflow:hidden"><div class="t tb ls" style="left:4.5px;top:3px;color:#000">**** 2.  SelectApp ****</div></div>
<div class="t tb tm" style="left:1129px;top:194px;color:#000">0</div>
<div class="t tb tm" style="left:4px;width:40px;text-align:center;top:214px;color:#000">163</div>
<div class="t tb tm" style="left:45.5px;top:214px;color:#000">00</div>
<div class="t tb tm" style="left:95px;top:214px;color:#000">10:08:29,88</div>
<svg class="a" style="left:167.5px;top:212px" width="15" height="16" viewBox="0 0 15 16"><defs><linearGradient id="ig" x1="0" y1="0" x2="0" y2="1"><stop offset="0" stop-color="#d8eeff"/><stop offset="0.45" stop-color="#4ab0fa"/><stop offset="0.55" stop-color="#1090f8"/><stop offset="1" stop-color="#0a8af0"/></linearGradient></defs><path d="M7 0.8 L13.5 7.8 L7 14.8 L0.5 7.8 Z" fill="url(#ig)" stroke="#0a7ec8" stroke-width="1"/><rect x="6" y="3.5" width="2" height="1.8" fill="#fff"/><rect x="6" y="6.5" width="2" height="5" fill="#fff"/><rect x="5.5" y="10.5" width="3" height="1.2" fill="#fff"/></svg>
<div class="t tb ls" style="left:200.5px;top:214px;color:#000">Insert Remark</div>
<div class="a" style="left:594px;top:211px;width:529px;height:19px;overflow:hidden"><div class="t tb ls" style="left:4.5px;top:3px;color:#000">=== SelectApp ===</div></div>
<div class="t tb tm" style="left:1129px;top:214px;color:#000">0</div>
<div class="t tb tm" style="left:4px;width:40px;text-align:center;top:234px;color:#000">201</div>
<div class="t tb tm" style="left:45.5px;top:234px;color:#000">00</div>
<div class="t tb tm" style="left:95px;top:234px;color:#000">10:08:29,98</div>
<svg class="a" style="left:167.5px;top:232px" width="15" height="16" viewBox="0 0 15 16"><defs><linearGradient id="ig" x1="0" y1="0" x2="0" y2="1"><stop offset="0" stop-color="#d8eeff"/><stop offset="0.45" stop-color="#4ab0fa"/><stop offset="0.55" stop-color="#1090f8"/><stop offset="1" stop-color="#0a8af0"/></linearGradient></defs><path d="M7 0.8 L13.5 7.8 L7 14.8 L0.5 7.8 Z" fill="url(#ig)" stroke="#0a7ec8" stroke-width="1"/><rect x="6" y="3.5" width="2" height="1.8" fill="#fff"/><rect x="6" y="6.5" width="2" height="5" fill="#fff"/><rect x="5.5" y="10.5" width="3" height="1.2" fill="#fff"/></svg>
<div class="t tb ls" style="left:200.5px;top:234px;color:#000">Insert Remark</div>
<div class="a" style="left:594px;top:231px;width:529px;height:19px;overflow:hidden"><div class="t tb ls" style="left:4.5px;top:3px;color:#000">**** 3.  InitializeContext ****</div></div>
<div class="t tb tm" style="left:1129px;top:234px;color:#000">1</div>
<div class="t tb tm" style="left:4px;width:40px;text-align:center;top:254px;color:#000">210</div>
<div class="t tb tm" style="left:45.5px;top:254px;color:#000">00</div>
<div class="t tb tm" style="left:95px;top:254px;color:#000">10:08:29,99</div>
<svg class="a" style="left:167.5px;top:252px" width="15" height="16" viewBox="0 0 15 16"><defs><linearGradient id="ig" x1="0" y1="0" x2="0" y2="1"><stop offset="0" stop-color="#d8eeff"/><stop offset="0.45" stop-color="#4ab0fa"/><stop offset="0.55" stop-color="#1090f8"/><stop offset="1" stop-color="#0a8af0"/></linearGradient></defs><path d="M7 0.8 L13.5 7.8 L7 14.8 L0.5 7.8 Z" fill="url(#ig)" stroke="#0a7ec8" stroke-width="1"/><rect x="6" y="3.5" width="2" height="1.8" fill="#fff"/><rect x="6" y="6.5" width="2" height="5" fill="#fff"/><rect x="5.5" y="10.5" width="3" height="1.2" fill="#fff"/></svg>
<div class="t tb ls" style="left:200.5px;top:254px;color:#000">Insert Remark</div>
<div class="a" style="left:594px;top:251px;width:529px;height:19px;overflow:hidden"><div class="t tb ls" style="left:4.5px;top:3px;color:#000">=== InitializeContext ===</div></div>
<div class="t tb tm" style="left:1129px;top:254px;color:#000">1</div>
<div class="t tb tm" style="left:4px;width:40px;text-align:center;top:274px;color:#000">213</div>
<div class="t tb tm" style="left:45.5px;top:274px;color:#000">00</div>
<div class="t tb tm" style="left:95px;top:274px;color:#000">10:08:29,99</div>
<svg class="a" style="left:168px;top:273px" width="26" height="16" viewBox="0 0 26 16"><path d="M6.5 0.5 H10 L11 2.5 L12 1 H15 V8 L8.5 15 H2 L0.5 13.5 V11 L5.5 5 V2 Z" fill="#4a5656" stroke="#0a0a10" stroke-width="1"/><path d="M5.5 6 L11.5 7.5" stroke="#000" stroke-width="1.6"/><path d="M3 12 L4 11 M5 13 L6 12 M6 10 L7 9 M8 11 L9 10" stroke="#5a2a9a" stroke-width="0.9"/><path d="M16 5.5 H21 V3 L24 6.5 L21 10 V7.5 H16 Z" fill="#4a10e0"/></svg>
<div class="t tb ls" style="left:200.5px;top:274px;color:#0000ff">Send Message</div>
<div class="t tb ls" style="left:393px;top:274px;color:#000">TEEC_InitializeContext_Req</div>
<div class="a" style="left:594px;top:271px;width:529px;height:19px;overflow:hidden"><div class="t tb ls" style="left:4.5px;top:3px;color:#000">Send the content of Structured Variable [SYS] Message in construction, then wait Message TEEC_InitializeContext_Resp</div></div>
<div class="t tb tm" style="left:1129px;top:274px;color:#000">1</div>
<div class="t tb tm" style="left:4px;width:40px;text-align:center;top:294px;color:#000">218</div>
<div class="t tb tm" style="left:45.5px;top:294px;color:#000">00</div>
<div class="t tb tm" style="left:95px;top:294px;color:#000">10:08:30,02</div>
<svg class="a" style="left:168px;top:293px" width="26" height="16" viewBox="0 0 26 16"><path d="M6.5 0.5 H10 L11 2.5 L12 1 H15 V8 L8.5 15 H2 L0.5 13.5 V11 L5.5 5 V2 Z" fill="#4a5656" stroke="#0a0a10" stroke-width="1"/><path d="M5.5 6 L11.5 7.5" stroke="#000" stroke-width="1.6"/><path d="M3 12 L4 11 M5 13 L6 12 M6 10 L7 9 M8 11 L9 10" stroke="#5a2a9a" stroke-width="0.9"/><path d="M24 5.5 H19 V3 L16 6.5 L19 10 V7.5 H24 Z" fill="#4a10e0"/></svg>
<div class="t tb ls" style="left:200.5px;top:294px;color:#ff00ff">Message Reception</div>
<div class="t tb ls" style="left:393px;top:294px;color:#000">TEEC_InitializeContext_Resp</div>
<div class="t tb tm" style="left:1129px;top:294px;color:#000">1</div>
<div class="t tb tm" style="left:4px;width:40px;text-align:center;top:314px;color:#000">247</div>
<div class="t tb tm" style="left:45.5px;top:314px;color:#000">00</div>
<div class="t tb tm" style="left:95px;top:314px;color:#000">10:08:30,02</div>
<svg class="a" style="left:167.5px;top:312px" width="15" height="16" viewBox="0 0 15 16"><defs><linearGradient id="ig" x1="0" y1="0" x2="0" y2="1"><stop offset="0" stop-color="#d8eeff"/><stop offset="0.45" stop-color="#4ab0fa"/><stop offset="0.55" stop-color="#1090f8"/><stop offset="1" stop-color="#0a8af0"/></linearGradient></defs><path d="M7 0.8 L13.5 7.8 L7 14.8 L0.5 7.8 Z" fill="url(#ig)" stroke="#0a7ec8" stroke-width="1"/><rect x="6" y="3.5" width="2" height="1.8" fill="#fff"/><rect x="6" y="6.5" width="2" height="5" fill="#fff"/><rect x="5.5" y="10.5" width="3" height="1.2" fill="#fff"/></svg>
<div class="t tb ls" style="left:200.5px;top:314px;color:#000">Insert Remark</div>
<div class="a" style="left:594px;top:311px;width:529px;height:19px;overflow:hidden"><div class="t tb ls" style="left:4.5px;top:3px;color:#000">**** 4.  OpenSession ****</div></div>
<div class="t tb tm" style="left:1129px;top:314px;color:#000">1</div>
<div class="t tb tm" style="left:4px;width:40px;text-align:center;top:334px;color:#000">261</div>
<div class="t tb tm" style="left:45.5px;top:334px;color:#000">00</div>
<div class="t tb tm" style="left:95px;top:334px;color:#000">10:08:30,03</div>
<svg class="a" style="left:167.5px;top:332px" width="15" height="16" viewBox="0 0 15 16"><defs><linearGradient id="ig" x1="0" y1="0" x2="0" y2="1"><stop offset="0" stop-color="#d8eeff"/><stop offset="0.45" stop-color="#4ab0fa"/><stop offset="0.55" stop-color="#1090f8"/><stop offset="1" stop-color="#0a8af0"/></linearGradient></defs><path d="M7 0.8 L13.5 7.8 L7 14.8 L0.5 7.8 Z" fill="url(#ig)" stroke="#0a7ec8" stroke-width="1"/><rect x="6" y="3.5" width="2" height="1.8" fill="#fff"/><rect x="6" y="6.5" width="2" height="5" fill="#fff"/><rect x="5.5" y="10.5" width="3" height="1.2" fill="#fff"/></svg>
<div class="t tb ls" style="left:200.5px;top:334px;color:#000">Insert Remark</div>
<div class="a" style="left:594px;top:331px;width:529px;height:19px;overflow:hidden"><div class="t tb ls" style="left:4.5px;top:3px;color:#000">=== OpenSession ===</div></div>
<div class="t tb tm" style="left:1129px;top:334px;color:#000">1</div>
<div class="t tb tm" style="left:4px;width:40px;text-align:center;top:354px;color:#fff">287</div>
<div class="t tb tm" style="left:45.5px;top:354px;color:#fff">00</div>
<div class="t tb tm" style="left:95px;top:354px;color:#fff">10:08:30,05</div>
<svg class="a" style="left:168px;top:353px" width="26" height="16" viewBox="0 0 26 16"><path d="M6.5 0.5 H10 L11 2.5 L12 1 H15 V8 L8.5 15 H2 L0.5 13.5 V11 L5.5 5 V2 Z" fill="#4a5656" stroke="#0a0a10" stroke-width="1"/><path d="M5.5 6 L11.5 7.5" stroke="#000" stroke-width="1.6"/><path d="M3 12 L4 11 M5 13 L6 12 M6 10 L7 9 M8 11 L9 10" stroke="#5a2a9a" stroke-width="0.9"/><path d="M16 5.5 H21 V3 L24 6.5 L21 10 V7.5 H16 Z" fill="#4a10e0"/></svg>
<div class="t tb ls" style="left:200.5px;top:354px;color:#fff">Send Message</div>
<div class="t tb ls" style="left:393px;top:354px;color:#fff">TEEC_OpenSession_Req</div>
<div class="a" style="left:594px;top:351px;width:529px;height:19px;overflow:hidden"><div class="t tb ls" style="left:4.5px;top:3px;color:#fff">Send the content of Structured Variable [SYS] Message in construction, then wait Message TEEC_OpenSession_Resp</div></div>
<div class="t tb tm" style="left:1129px;top:354px;color:#fff">1</div>
<div class="t tb tm" style="left:4px;width:40px;text-align:center;top:374px;color:#000">292</div>
<div class="t tb tm" style="left:45.5px;top:374px;color:#000">00</div>
<div class="t tb tm" style="left:95px;top:374px;color:#000">10:08:30,06</div>
<svg class="a" style="left:168px;top:373px" width="26" height="16" viewBox="0 0 26 16"><path d="M6.5 0.5 H10 L11 2.5 L12 1 H15 V8 L8.5 15 H2 L0.5 13.5 V11 L5.5 5 V2 Z" fill="#4a5656" stroke="#0a0a10" stroke-width="1"/><path d="M5.5 6 L11.5 7.5" stroke="#000" stroke-width="1.6"/><path d="M3 12 L4 11 M5 13 L6 12 M6 10 L7 9 M8 11 L9 10" stroke="#5a2a9a" stroke-width="0.9"/><path d="M24 5.5 H19 V3 L16 6.5 L19 10 V7.5 H24 Z" fill="#4a10e0"/></svg>
<div class="t tb ls" style="left:200.5px;top:374px;color:#ff00ff">Message Reception</div>
<div class="t tb ls" style="left:393px;top:374px;color:#000">TEEC_OpenSession_Resp</div>
<div class="t tb tm" style="left:1129px;top:374px;color:#000">1</div>
<div class="t tb tm" style="left:4px;width:40px;text-align:center;top:394px;color:#000">309</div>
<div class="t tb tm" style="left:45.5px;top:394px;color:#000">00</div>
<div class="t tb tm" style="left:95px;top:394px;color:#000">10:08:30,07</div>
<svg class="a" style="left:167.5px;top:392px" width="14" height="16" viewBox="0 0 14 16"><path d="M7 1 L13.5 14.5 H0.5 Z" fill="#ffc828" stroke="#d89a00" stroke-width="1"/><path d="M7 3 L10 11 L7 13.5 L4 11 Z" fill="#fff27a"/><rect x="6.2" y="5" width="1.7" height="5" fill="#222"/><rect x="6.2" y="11" width="1.7" height="1.8" fill="#222"/></svg>
<div class="t tb ls" style="left:200.5px;top:394px;color:#000">Insert Remark</div>
<div class="a" style="left:594px;top:391px;width:529px;height:19px;overflow:hidden"><div class="t tb ls" style="left:4.5px;top:3px;color:#000">Verfication fails during Preamble : TEEC Result is different from 00000000</div></div>
<div class="t tb tm" style="left:1129px;top:394px;color:#000">1</div>
<div class="t tb tm" style="left:4px;width:40px;text-align:center;top:414px;color:#000">331</div>
<div class="t tb tm" style="left:45.5px;top:414px;color:#000">00</div>
<div class="t tb tm" style="left:95px;top:414px;color:#000">10:08:30,08</div>
<svg class="a" style="left:167.5px;top:412px" width="14" height="16" viewBox="0 0 14 16"><path d="M7 1 L13.5 14.5 H0.5 Z" fill="#ffc828" stroke="#d89a00" stroke-width="1"/><path d="M7 3 L10 11 L7 13.5 L4 11 Z" fill="#fff27a"/><rect x="6.2" y="5" width="1.7" height="5" fill="#222"/><rect x="6.2" y="11" width="1.7" height="1.8" fill="#222"/></svg>
<div class="t tb ls" style="left:200.5px;top:414px;color:#000">Insert Remark</div>
<div class="a" style="left:594px;top:411px;width:529px;height:19px;overflow:hidden"><div class="t tb ls" style="left:4.5px;top:3px;color:#000">Verfication fails during Preamble : Return origin is different from 00000004</div></div>
<div class="t tb tm" style="left:1129px;top:414px;color:#000">1</div>
<div class="t tb tm" style="left:4px;width:40px;text-align:center;top:434px;color:#000">357</div>
<div class="t tb tm" style="left:45.5px;top:434px;color:#000">00</div>
<div class="t tb tm" style="left:95px;top:434px;color:#000">10:08:30,08</div>
<svg class="a" style="left:167.5px;top:432px" width="15" height="16" viewBox="0 0 15 16"><defs><linearGradient id="ig" x1="0" y1="0" x2="0" y2="1"><stop offset="0" stop-color="#d8eeff"/><stop offset="0.45" stop-color="#4ab0fa"/><stop offset="0.55" stop-color="#1090f8"/><stop offset="1" stop-color="#0a8af0"/></linearGradient></defs><path d="M7 0.8 L13.5 7.8 L7 14.8 L0.5 7.8 Z" fill="url(#ig)" stroke="#0a7ec8" stroke-width="1"/><rect x="6" y="3.5" width="2" height="1.8" fill="#fff"/><rect x="6" y="6.5" width="2" height="5" fill="#fff"/><rect x="5.5" y="10.5" width="3" height="1.2" fill="#fff"/></svg>
<div class="t tb ls" style="left:200.5px;top:434px;color:#000">Insert Remark</div>
<div class="a" style="left:594px;top:431px;width:529px;height:19px;overflow:hidden"><div class="t tb ls" style="left:4.5px;top:3px;color:#000">**** 5.  Invoke_Remember_Expected_ParamTypes ****</div></div>
<div class="t tb tm" style="left:1129px;top:434px;color:#000">1</div>
<div class="t tb tm" style="left:4px;width:40px;text-align:center;top:454px;color:#000">370</div>
<div class="t tb tm" style="left:45.5px;top:454px;color:#000">00</div>
<div class="t tb tm" style="left:95px;top:454px;color:#000">10:08:30,09</div>
<svg class="a" style="left:167.5px;top:452px" width="15" height="16" viewBox="0 0 15 16"><defs><linearGradient id="ig" x1="0" y1="0" x2="0" y2="1"><stop offset="0" stop-color="#d8eeff"/><stop offset="0.45" stop-color="#4ab0fa"/><stop offset="0.55" stop-color="#1090f8"/><stop offset="1" stop-color="#0a8af0"/></linearGradient></defs><path d="M7 0.8 L13.5 7.8 L7 14.8 L0.5 7.8 Z" fill="url(#ig)" stroke="#0a7ec8" stroke-width="1"/><rect x="6" y="3.5" width="2" height="1.8" fill="#fff"/><rect x="6" y="6.5" width="2" height="5" fill="#fff"/><rect x="5.5" y="10.5" width="3" height="1.2" fill="#fff"/></svg>
<div class="t tb ls" style="left:200.5px;top:454px;color:#000">Insert Remark</div>
<div class="a" style="left:594px;top:451px;width:529px;height:19px;overflow:hidden"><div class="t tb ls" style="left:4.5px;top:3px;color:#000">===  Invoke_Remember_Expected_ParamTypes ===</div></div>
<div class="t tb tm" style="left:1129px;top:454px;color:#000">1</div>
<div class="t tb tm" style="left:4px;width:40px;text-align:center;top:474px;color:#000">383</div>
<div class="t tb tm" style="left:45.5px;top:474px;color:#000">00</div>
<div class="t tb tm" style="left:95px;top:474px;color:#000">10:08:30,10</div>
<svg class="a" style="left:168px;top:473px" width="26" height="16" viewBox="0 0 26 16"><path d="M6.5 0.5 H10 L11 2.5 L12 1 H15 V8 L8.5 15 H2 L0.5 13.5 V11 L5.5 5 V2 Z" fill="#4a5656" stroke="#0a0a10" stroke-width="1"/><path d="M5.5 6 L11.5 7.5" stroke="#000" stroke-width="1.6"/><path d="M3 12 L4 11 M5 13 L6 12 M6 10 L7 9 M8 11 L9 10" stroke="#5a2a9a" stroke-width="0.9"/><path d="M16 5.5 H21 V3 L24 6.5 L21 10 V7.5 H16 Z" fill="#4a10e0"/></svg>
<div class="t tb ls" style="left:200.5px;top:474px;color:#0000ff">Send Message</div>
<div class="t tb ls" style="left:393px;top:474px;color:#000">TEEC_InvokeCommand_Req</div>
<div class="a" style="left:594px;top:471px;width:529px;height:19px;overflow:hidden"><div class="t tb ls" style="left:4.5px;top:3px;color:#000">Send the content of Structured Variable [SYS] Message in construction, then wait Message TEEC_InvokeCommand_Resp</div></div>
<div class="t tb tm" style="left:1129px;top:474px;color:#000">1</div>
<div class="t tb tm" style="left:4px;width:40px;text-align:center;top:494px;color:#000">388</div>
<div class="t tb tm" style="left:45.5px;top:494px;color:#000">00</div>
<div class="t tb tm" style="left:95px;top:494px;color:#000">10:08:30,11</div>
<svg class="a" style="left:168px;top:493px" width="26" height="16" viewBox="0 0 26 16"><path d="M6.5 0.5 H10 L11 2.5 L12 1 H15 V8 L8.5 15 H2 L0.5 13.5 V11 L5.5 5 V2 Z" fill="#4a5656" stroke="#0a0a10" stroke-width="1"/><path d="M5.5 6 L11.5 7.5" stroke="#000" stroke-width="1.6"/><path d="M3 12 L4 11 M5 13 L6 12 M6 10 L7 9 M8 11 L9 10" stroke="#5a2a9a" stroke-width="0.9"/><path d="M24 5.5 H19 V3 L16 6.5 L19 10 V7.5 H24 Z" fill="#4a10e0"/></svg>
<div class="t tb ls" style="left:200.5px;top:494px;color:#ff00ff">Message Reception</div>
<div class="t tb ls" style="left:393px;top:494px;color:#000">TEEC_InvokeCommand_Resp</div>
<div class="t tb tm" style="left:1129px;top:494px;color:#000">1</div>
<div class="t tb tm" style="left:4px;width:40px;text-align:center;top:514px;color:#000">398</div>
<div class="t tb tm" style="left:45.5px;top:514px;color:#000">00</div>
<div class="t tb tm" style="left:95px;top:514px;color:#000">10:08:30,11</div>
<svg class="a" style="left:167.5px;top:512px" width="14" height="16" viewBox="0 0 14 16"><path d="M7 1 L13.5 14.5 H0.5 Z" fill="#ffc828" stroke="#d89a00" stroke-width="1"/><path d="M7 3 L10 11 L7 13.5 L4 11 Z" fill="#fff27a"/><rect x="6.2" y="5" width="1.7" height="5" fill="#222"/><rect x="6.2" y="11" width="1.7" height="1.8" fill="#222"/></svg>
<div class="t tb ls" style="left:200.5px;top:514px;color:#000">Insert Remark</div>
<div class="a" style="left:594px;top:511px;width:529px;height:19px;overflow:hidden"><div class="t tb ls" style="left:4.5px;top:3px;color:#000">Verfication fails during Preamble : TEEC Result is different from 00000000</div></div>
<div class="t tb tm" style="left:1129px;top:514px;color:#000">1</div>
<div class="t tb tm" style="left:4px;width:40px;text-align:center;top:534px;color:#000">413</div>
<div class="t tb tm" style="left:45.5px;top:534px;color:#000">00</div>
<div class="t tb tm" style="left:95px;top:534px;color:#000">10:08:30,11</div>
<svg class="a" style="left:167.5px;top:532px" width="15" height="16" viewBox="0 0 15 16"><defs><linearGradient id="ig" x1="0" y1="0" x2="0" y2="1"><stop offset="0" stop-color="#d8eeff"/><stop offset="0.45" stop-color="#4ab0fa"/><stop offset="0.55" stop-color="#1090f8"/><stop offset="1" stop-color="#0a8af0"/></linearGradient></defs><path d="M7 0.8 L13.5 7.8 L7 14.8 L0.5 7.8 Z" fill="url(#ig)" stroke="#0a7ec8" stroke-width="1"/><rect x="6" y="3.5" width="2" height="1.8" fill="#fff"/><rect x="6" y="6.5" width="2" height="5" fill="#fff"/><rect x="5.5" y="10.5" width="3" height="1.2" fill="#fff"/></svg>
<div class="t tb ls" style="left:200.5px;top:534px;color:#000">Insert Remark</div>
<div class="a" style="left:594px;top:531px;width:529px;height:19px;overflow:hidden"><div class="t tb ls" style="left:4.5px;top:3px;color:#000">========== BODY ==========</div></div>
<div class="t tb tm" style="left:1129px;top:534px;color:#000">1</div>
<div class="t tb tm" style="left:4px;width:40px;text-align:center;top:554px;color:#000">431</div>
<div class="t tb tm" style="left:45.5px;top:554px;color:#000">00</div>
<div class="t tb tm" style="left:95px;top:554px;color:#000">10:08:30,11</div>
<svg class="a" style="left:167.5px;top:552px" width="15" height="16" viewBox="0 0 15 16"><defs><linearGradient id="ig" x1="0" y1="0" x2="0" y2="1"><stop offset="0" stop-color="#d8eeff"/><stop offset="0.45" stop-color="#4ab0fa"/><stop offset="0.55" stop-color="#1090f8"/><stop offset="1" stop-color="#0a8af0"/></linearGradient></defs><path d="M7 0.8 L13.5 7.8 L7 14.8 L0.5 7.8 Z" fill="url(#ig)" stroke="#0a7ec8" stroke-width="1"/><rect x="6" y="3.5" width="2" height="1.8" fill="#fff"/><rect x="6" y="6.5" width="2" height="5" fill="#fff"/><rect x="5.5" y="10.5" width="3" height="1.2" fill="#fff"/></svg>
<div class="t tb ls" style="left:200.5px;top:554px;color:#000">Insert Remark</div>
<div class="a" style="left:594px;top:551px;width:529px;height:19px;overflow:hidden"><div class="t tb ls" style="left:4.5px;top:3px;color:#000">**** 6.  Invoke_0param_and_check_expectedParameterType ****</div></div>
<div class="t tb tm" style="left:1129px;top:554px;color:#000">1</div>
<div class="t tb tm" style="left:4px;width:40px;text-align:center;top:574px;color:#000">442</div>
<div class="t tb tm" style="left:45.5px;top:574px;color:#000">00</div>
<div class="t tb tm" style="left:95px;top:574px;color:#000">10:08:30,11</div>
<svg class="a" style="left:167.5px;top:572px" width="15" height="16" viewBox="0 0 15 16"><defs><linearGradient id="ig" x1="0" y1="0" x2="0" y2="1"><stop offset="0" stop-color="#d8eeff"/><stop offset="0.45" stop-color="#4ab0fa"/><stop offset="0.55" stop-color="#1090f8"/><stop offset="1" stop-color="#0a8af0"/></linearGradient></defs><path d="M7 0.8 L13.5 7.8 L7 14.8 L0.5 7.8 Z" fill="url(#ig)" stroke="#0a7ec8" stroke-width="1"/><rect x="6" y="3.5" width="2" height="1.8" fill="#fff"/><rect x="6" y="6.5" width="2" height="5" fill="#fff"/><rect x="5.5" y="10.5" width="3" height="1.2" fill="#fff"/></svg>
<div class="t tb ls" style="left:200.5px;top:574px;color:#000">Insert Remark</div>
<div class="a" style="left:594px;top:571px;width:529px;height:19px;overflow:hidden"><div class="t tb ls" style="left:4.5px;top:3px;color:#000">===  Invoke_0param_and_check_expectedParameterType ===</div></div>
<div class="t tb tm" style="left:1129px;top:574px;color:#000">1</div>
<div class="a" style="left:1894px;top:91px;width:1px;height:502px;background:#fff"></div>
<div class="a" style="left:1895px;top:91px;width:20px;height:502px;background:#eeeeee"></div>
<div class="a" style="left:1902px;top:112px;width:6px;height:276px;background:#888"></div>
<div class="a" style="left:0;top:593px;width:1915px;height:6px;background:#f0f0f0"></div>
<div class="a" style="left:0;top:594px;width:1915px;height:1px;background:#fafafa"></div>
<div class="a" style="left:0;top:598px;width:1915px;height:1px;background:#a8a8a8"></div>
<div class="a" style="left:0;top:599px;width:1915px;height:1px;background:#666"></div>
<div class="a" style="left:0;top:600px;width:1915px;height:1px;background:#a0a0a0"></div>
<div class="a" style="left:0;top:601px;width:1915px;height:1px;background:#666"></div>
<div class="a" style="left:8px;top:602px;width:1900px;height:392px;background:#fff"></div>
<div class="a" style="left:0;top:599px;width:1px;height:395px;background:#686868"></div>
<div class="a" style="left:1px;top:602px;width:2px;height:392px;background:#fff"></div>
<div class="a" style="left:3px;top:602px;width:3px;height:392px;background:#f0f0f0"></div>
<div class="a" style="left:6px;top:602px;width:2px;height:392px;background:#686868"></div>
<div class="a" style="left:1908px;top:602px;width:5px;height:392px;background:#f0f0f0"></div>
<div class="a" style="left:1909px;top:602px;width:1px;height:392px;background:#fff"></div>
<div class="a" style="left:1913px;top:599px;width:2px;height:396px;background:#686868"></div>
<div class="a" style="left:0;top:994px;width:1915px;height:1px;background:#eeeeee"></div>
<div class="a" style="left:0;top:995px;width:1915px;height:2px;background:#ffffff"></div>
<div class="mono" style="left:11px;top:607px">Name</div>
<div class="mono" style="left:282px;top:607px">D..</div>
<div class="mono" style="left:311px;top:607px">T..</div>
<div class="mono" style="left:342px;top:607px">Value</div>
<div class="mono" style="left:441px;top:607px">Comment</div>
<div class="mono" style="left:601px;top:607px">Binary Data</div>
<div class="a" style="left:275px;top:602px;width:1px;height:22px;background:#e6e6e6"></div>
<div class="a" style="left:305px;top:602px;width:1px;height:22px;background:#e6e6e6"></div>
<div class="a" style="left:335px;top:602px;width:1px;height:22px;background:#e6e6e6"></div>
<div class="a" style="left:435px;top:602px;width:1px;height:22px;background:#e6e6e6"></div>
<div class="a" style="left:595px;top:602px;width:1px;height:22px;background:#e6e6e6"></div>
<div class="a" style="left:795px;top:602px;width:1px;height:22px;background:#e6e6e6"></div>
<div class="a" style="left:39px;top:641px;width:1px;height:318px;background:repeating-linear-gradient(#a0a0a0 0 1px,transparent 1px 2px)"></div>
<div class="a" style="left:64px;top:695px;width:1px;height:66px;background:repeating-linear-gradient(#a0a0a0 0 1px,transparent 1px 2px)"></div>
<div class="a" style="left:89px;top:767px;width:1px;height:138px;background:repeating-linear-gradient(#a0a0a0 0 1px,transparent 1px 2px)"></div>
<div class="a" style="left:39px;top:652px;width:17px;height:1px;background:repeating-linear-gradient(90deg,#a0a0a0 0 1px,transparent 1px 2px)"></div>
<div class="a" style="left:39px;top:670px;width:17px;height:1px;background:repeating-linear-gradient(90deg,#a0a0a0 0 1px,transparent 1px 2px)"></div>
<div class="a" style="left:39px;top:688px;width:17px;height:1px;background:repeating-linear-gradient(90deg,#a0a0a0 0 1px,transparent 1px 2px)"></div>
<div class="a" style="left:64px;top:706px;width:17px;height:1px;background:repeating-linear-gradient(90deg,#a0a0a0 0 1px,transparent 1px 2px)"></div>
<div class="a" style="left:64px;top:724px;width:17px;height:1px;background:repeating-linear-gradient(90deg,#a0a0a0 0 1px,transparent 1px 2px)"></div>
<div class="a" style="left:64px;top:742px;width:17px;height:1px;background:repeating-linear-gradient(90deg,#a0a0a0 0 1px,transparent 1px 2px)"></div>
<div class="a" style="left:64px;top:760px;width:17px;height:1px;background:repeating-linear-gradient(90deg,#a0a0a0 0 1px,transparent 1px 2px)"></div>
<div class="a" style="left:89px;top:778px;width:17px;height:1px;background:repeating-linear-gradient(90deg,#a0a0a0 0 1px,transparent 1px 2px)"></div>
<div class="a" style="left:89px;top:796px;width:17px;height:1px;background:repeating-linear-gradient(90deg,#a0a0a0 0 1px,transparent 1px 2px)"></div>
<div class="a" style="left:89px;top:814px;width:17px;height:1px;background:repeating-linear-gradient(90deg,#a0a0a0 0 1px,transparent 1px 2px)"></div>
<div class="a" style="left:89px;top:832px;width:17px;height:1px;background:repeating-linear-gradient(90deg,#a0a0a0 0 1px,transparent 1px 2px)"></div>
<div class="a" style="left:89px;top:850px;width:17px;height:1px;background:repeating-linear-gradient(90deg,#a0a0a0 0 1px,transparent 1px 2px)"></div>
<div class="a" style="left:89px;top:868px;width:17px;height:1px;background:repeating-linear-gradient(90deg,#a0a0a0 0 1px,transparent 1px 2px)"></div>
<div class="a" style="left:89px;top:886px;width:17px;height:1px;background:repeating-linear-gradient(90deg,#a0a0a0 0 1px,transparent 1px 2px)"></div>
<div class="a" style="left:89px;top:904px;width:17px;height:1px;background:repeating-linear-gradient(90deg,#a0a0a0 0 1px,transparent 1px 2px)"></div>
<div class="a" style="left:39px;top:922px;width:17px;height:1px;background:repeating-linear-gradient(90deg,#a0a0a0 0 1px,transparent 1px 2px)"></div>
<div class="a" style="left:39px;top:940px;width:17px;height:1px;background:repeating-linear-gradient(90deg,#a0a0a0 0 1px,transparent 1px 2px)"></div>
<div class="a" style="left:39px;top:958px;width:17px;height:1px;background:repeating-linear-gradient(90deg,#a0a0a0 0 1px,transparent 1px 2px)"></div>
<div class="a" style="left:52px;top:625px;width:38px;height:18px;background:#e2e2e2"></div>
<div class="a" style="left:21px;top:634px;width:10px;height:1px;background:repeating-linear-gradient(90deg,#a0a0a0 0 1px,transparent 1px 2px)"></div>
<div class="mono" style="left:55px;top:628px">Data</div>
<svg class="a" style="left:31px;top:627px" width="17" height="14" viewBox="0 0 17 14"><path d="M1.5 2 Q2 0.5 3.5 0.5 H6.5 L8 2 H14.5 V13.5 H2 Z" fill="#dcd688" stroke="#b8b070" stroke-width="1"/><path d="M0.5 5 H13.5 L16 13.5 H2.5 Z" fill="#ebe69a" stroke="#c0b870" stroke-width="1"/><path d="M2 6.5 H12" stroke="#fff" stroke-width="1.2"/><path d="M13.5 5 L16 13.5" stroke="#505050" stroke-width="1.2"/></svg>
<div class="a" style="left:10px;top:629px;width:11px;height:11px;border:1px solid #9a9a9a;border-radius:2px;background:linear-gradient(#fff 0,#fff 50%,#e4e4e4 50%,#e8e8e8)"><div class="a" style="left:1.5px;top:4px;width:7px;height:1px;background:#3a5ab8"></div></div>
<div class="mono" style="left:282px;top:628px">D..</div>
<div class="mono" style="left:603px;top:628px">00 05 00 00 00 01 53...</div>
<div class="mono" style="left:80px;top:646px">MsgId</div>
<svg class="a" style="left:56px;top:645px" width="17" height="16" viewBox="0 0 17 16"><path d="M8 0.5 H11.5 V4 H15.5 V6.5 H12.7 V9.5 L15.5 12 V14.5 H11.5 V12.4 H8 V14.5 H4.5 V11.5 H0.5 V6.8 H4.5 V4 H8 Z" fill="#ffff00" stroke="#222" stroke-width="1"/></svg>
<div class="mono" style="left:313px;top:646px">ID</div>
<div class="mono" style="left:342px;top:646px">0005</div>
<div class="mono" style="left:441px;top:646px">Open Session Re...</div>
<div class="mono" style="left:603px;top:646px">00 05</div>
<div class="mono" style="left:80px;top:664px">Context Id</div>
<svg class="a" style="left:56px;top:663px" width="17" height="16" viewBox="0 0 17 16"><path d="M8 0.5 H11.5 V4 H15.5 V6.5 H12.7 V9.5 L15.5 12 V14.5 H11.5 V12.4 H8 V14.5 H4.5 V11.5 H0.5 V6.8 H4.5 V4 H8 Z" fill="#ffff00" stroke="#222" stroke-width="1"/></svg>
<div class="mono" style="left:311px;top:664px">U..</div>
<div class="mono" style="left:342px;top:664px">00000001</div>
<div class="mono" style="left:603px;top:664px">00 00 00 01</div>
<div class="mono" style="left:80px;top:682px">destination</div>
<svg class="a" style="left:56px;top:680px" width="17" height="16" viewBox="0 0 17 16"><path d="M0.5 1.5 H6.5 L7.5 2.5 H9 V4.5 H7.5 L6 6 L4.5 6.5 V8 L5.5 9.5 H1.5 L2.5 8 V6.5 L0.5 5.5 Z" fill="#ffff00" stroke="#222" stroke-width="0.9"/><path d="M10.5 5 H14 V6.5 L12.5 7.5 H15.5 V14 H9 V12.5 L7.5 12 V9.5 L9 9.5 L9 8 L11.5 7.5 Z" fill="#40c8c8" stroke="#222" stroke-width="0.9"/></svg>
<div class="a" style="left:34px;top:683px;width:11px;height:11px;border:1px solid #9a9a9a;border-radius:2px;background:linear-gradient(#fff 0,#fff 50%,#e4e4e4 50%,#e8e8e8)"><div class="a" style="left:1.5px;top:4px;width:7px;height:1px;background:#3a5ab8"></div></div>
<div class="mono" style="left:342px;top:682px">534D4152...</div>
<div class="mono" style="left:603px;top:682px">53 4D 41 52 54 2D 43...</div>
<div class="mono" style="left:105px;top:700px">timeLow</div>
<svg class="a" style="left:81px;top:699px" width="17" height="16" viewBox="0 0 17 16"><path d="M8 0.5 H11.5 V4 H15.5 V6.5 H12.7 V9.5 L15.5 12 V14.5 H11.5 V12.4 H8 V14.5 H4.5 V11.5 H0.5 V6.8 H4.5 V4 H8 Z" fill="#ffff00" stroke="#222" stroke-width="1"/></svg>
<div class="mono" style="left:311px;top:700px">U..</div>
<div class="mono" style="left:342px;top:700px">534D4152</div>
<div class="mono" style="left:603px;top:700px">53 4D 41 52</div>
<div class="mono" style="left:105px;top:718px">timeMid</div>
<svg class="a" style="left:81px;top:717px" width="17" height="16" viewBox="0 0 17 16"><path d="M8 0.5 H11.5 V4 H15.5 V6.5 H12.7 V9.5 L15.5 12 V14.5 H11.5 V12.4 H8 V14.5 H4.5 V11.5 H0.5 V6.8 H4.5 V4 H8 Z" fill="#ffff00" stroke="#222" stroke-width="1"/></svg>
<div class="mono" style="left:311px;top:718px">U..</div>
<div class="mono" style="left:342px;top:718px">542D</div>
<div class="mono" style="left:603px;top:718px">54 2D</div>
<div class="mono" style="left:105px;top:736px">TimeHiAndVersion</div>
<svg class="a" style="left:81px;top:735px" width="17" height="16" viewBox="0 0 17 16"><path d="M8 0.5 H11.5 V4 H15.5 V6.5 H12.7 V9.5 L15.5 12 V14.5 H11.5 V12.4 H8 V14.5 H4.5 V11.5 H0.5 V6.8 H4.5 V4 H8 Z" fill="#ffff00" stroke="#222" stroke-width="1"/></svg>
<div class="mono" style="left:311px;top:736px">U..</div>
<div class="mono" style="left:342px;top:736px">4353</div>
<div class="mono" style="left:603px;top:736px">43 53</div>
<div class="mono" style="left:105px;top:754px">clockSeqAndNodes</div>
<svg class="a" style="left:81px;top:752px" width="17" height="16" viewBox="0 0 17 16"><path d="M0.5 1.5 H6.5 L7.5 2.5 H9 V4.5 H7.5 L6 6 L4.5 6.5 V8 L5.5 9.5 H1.5 L2.5 8 V6.5 L0.5 5.5 Z" fill="#ffff00" stroke="#222" stroke-width="0.9"/><path d="M10.5 5 H14 V6.5 L12.5 7.5 H15.5 V14 H9 V12.5 L7.5 12 V9.5 L9 9.5 L9 8 L11.5 7.5 Z" fill="#40c8c8" stroke="#222" stroke-width="0.9"/></svg>
<div class="a" style="left:59px;top:755px;width:11px;height:11px;border:1px solid #9a9a9a;border-radius:2px;background:linear-gradient(#fff 0,#fff 50%,#e4e4e4 50%,#e8e8e8)"><div class="a" style="left:1.5px;top:4px;width:7px;height:1px;background:#3a5ab8"></div></div>
<div class="mono" style="left:342px;top:754px">4C542D54...</div>
<div class="mono" style="left:603px;top:754px">4C 54 2D 54 41 2D 53 54</div>
<div class="mono" style="left:130px;top:772px">clockSeqAndNode</div>
<svg class="a" style="left:106px;top:771px" width="17" height="16" viewBox="0 0 17 16"><path d="M8 0.5 H11.5 V4 H15.5 V6.5 H12.7 V9.5 L15.5 12 V14.5 H11.5 V12.4 H8 V14.5 H4.5 V11.5 H0.5 V6.8 H4.5 V4 H8 Z" fill="#ffff00" stroke="#222" stroke-width="1"/></svg>
<div class="mono" style="left:311px;top:772px">U..</div>
<div class="mono" style="left:342px;top:772px">4C</div>
<div class="mono" style="left:603px;top:772px">4C</div>
<div class="mono" style="left:130px;top:790px">clockSeqAndNode</div>
<svg class="a" style="left:106px;top:789px" width="17" height="16" viewBox="0 0 17 16"><path d="M8 0.5 H11.5 V4 H15.5 V6.5 H12.7 V9.5 L15.5 12 V14.5 H11.5 V12.4 H8 V14.5 H4.5 V11.5 H0.5 V6.8 H4.5 V4 H8 Z" fill="#ffff00" stroke="#222" stroke-width="1"/></svg>
<div class="mono" style="left:311px;top:790px">U..</div>
<div class="mono" style="left:342px;top:790px">54</div>
<div class="mono" style="left:603px;top:790px">54</div>
<div class="mono" style="left:130px;top:808px">clockSeqAndNode</div>
<svg class="a" style="left:106px;top:807px" width="17" height="16" viewBox="0 0 17 16"><path d="M8 0.5 H11.5 V4 H15.5 V6.5 H12.7 V9.5 L15.5 12 V14.5 H11.5 V12.4 H8 V14.5 H4.5 V11.5 H0.5 V6.8 H4.5 V4 H8 Z" fill="#ffff00" stroke="#222" stroke-width="1"/></svg>
<div class="mono" style="left:311px;top:808px">U..</div>
<div class="mono" style="left:342px;top:808px">2D</div>
<div class="mono" style="left:603px;top:808px">2D</div>
<div class="mono" style="left:130px;top:826px">clockSeqAndNode</div>
<svg class="a" style="left:106px;top:825px" width="17" height="16" viewBox="0 0 17 16"><path d="M8 0.5 H11.5 V4 H15.5 V6.5 H12.7 V9.5 L15.5 12 V14.5 H11.5 V12.4 H8 V14.5 H4.5 V11.5 H0.5 V6.8 H4.5 V4 H8 Z" fill="#ffff00" stroke="#222" stroke-width="1"/></svg>
<div class="mono" style="left:311px;top:826px">U..</div>
<div class="mono" style="left:342px;top:826px">54</div>
<div class="mono" style="left:603px;top:826px">54</div>
<div class="mono" style="left:130px;top:844px">clockSeqAndNode</div>
<svg class="a" style="left:106px;top:843px" width="17" height="16" viewBox="0 0 17 16"><path d="M8 0.5 H11.5 V4 H15.5 V6.5 H12.7 V9.5 L15.5 12 V14.5 H11.5 V12.4 H8 V14.5 H4.5 V11.5 H0.5 V6.8 H4.5 V4 H8 Z" fill="#ffff00" stroke="#222" stroke-width="1"/></svg>
<div class="mono" style="left:311px;top:844px">U..</div>
<div class="mono" style="left:342px;top:844px">41</div>
<div class="mono" style="left:603px;top:844px">41</div>
<div class="mono" style="left:130px;top:862px">clockSeqAndNode</div>
<svg class="a" style="left:106px;top:861px" width="17" height="16" viewBox="0 0 17 16"><path d="M8 0.5 H11.5 V4 H15.5 V6.5 H12.7 V9.5 L15.5 12 V14.5 H11.5 V12.4 H8 V14.5 H4.5 V11.5 H0.5 V6.8 H4.5 V4 H8 Z" fill="#ffff00" stroke="#222" stroke-width="1"/></svg>
<div class="mono" style="left:311px;top:862px">U..</div>
<div class="mono" style="left:342px;top:862px">2D</div>
<div class="mono" style="left:603px;top:862px">2D</div>
<div class="mono" style="left:130px;top:880px">clockSeqAndNode</div>
<svg class="a" style="left:106px;top:879px" width="17" height="16" viewBox="0 0 17 16"><path d="M8 0.5 H11.5 V4 H15.5 V6.5 H12.7 V9.5 L15.5 12 V14.5 H11.5 V12.4 H8 V14.5 H4.5 V11.5 H0.5 V6.8 H4.5 V4 H8 Z" fill="#ffff00" stroke="#222" stroke-width="1"/></svg>
<div class="mono" style="left:311px;top:880px">U..</div>
<div class="mono" style="left:342px;top:880px">53</div>
<div class="mono" style="left:603px;top:880px">53</div>
<div class="mono" style="left:130px;top:898px">clockSeqAndNode</div>
<svg class="a" style="left:106px;top:897px" width="17" height="16" viewBox="0 0 17 16"><path d="M8 0.5 H11.5 V4 H15.5 V6.5 H12.7 V9.5 L15.5 12 V14.5 H11.5 V12.4 H8 V14.5 H4.5 V11.5 H0.5 V6.8 H4.5 V4 H8 Z" fill="#ffff00" stroke="#222" stroke-width="1"/></svg>
<div class="mono" style="left:311px;top:898px">U..</div>
<div class="mono" style="left:342px;top:898px">54</div>
<div class="mono" style="left:603px;top:898px">54</div>
<div class="mono" style="left:80px;top:916px">connectionMethod</div>
<svg class="a" style="left:56px;top:915px" width="17" height="16" viewBox="0 0 17 16"><path d="M8 0.5 H11.5 V4 H15.5 V6.5 H12.7 V9.5 L15.5 12 V14.5 H11.5 V12.4 H8 V14.5 H4.5 V11.5 H0.5 V6.8 H4.5 V4 H8 Z" fill="#ffff00" stroke="#222" stroke-width="1"/></svg>
<div class="mono" style="left:311px;top:916px">U..</div>
<div class="mono" style="left:342px;top:916px">00000000</div>
<div class="mono" style="left:441px;top:916px">TEEC_LOGIN_PUBL...</div>
<div class="mono" style="left:603px;top:916px">00 00 00 00</div>
<div class="mono" style="left:80px;top:934px">ConnectionData</div>
<svg class="a" style="left:56px;top:933px" width="17" height="16" viewBox="0 0 17 16"><path d="M8 0.5 H11.5 V4 H15.5 V6.5 H12.7 V9.5 L15.5 12 V14.5 H11.5 V12.4 H8 V14.5 H4.5 V11.5 H0.5 V6.8 H4.5 V4 H8 Z" fill="#ffff00" stroke="#222" stroke-width="1"/><path d="M5 8 H11 M6 7 L5 8 L6 9 M10 7 L11 8 L10 9 M6 10 L9 13 M9 10 L6 13" stroke="#111" stroke-width="1"/></svg>
<div class="mono" style="left:313px;top:934px">b</div>
<div class="mono" style="left:342px;top:934px">00000000</div>
<div class="mono" style="left:603px;top:934px">00 04 00 00 00 00</div>
<div class="mono" style="left:80px;top:952px">operations</div>
<svg class="a" style="left:56px;top:949px" width="17" height="18" viewBox="0 0 17 18"><g transform="translate(0,2)"><path d="M0.5 1.5 H6.5 L7.5 2.5 H9 V4.5 H7.5 L6 6 L4.5 6.5 V8 L5.5 9.5 H1.5 L2.5 8 V6.5 L0.5 5.5 Z" fill="#ffff00" stroke="#222" stroke-width="0.9"/><path d="M10.5 5 H14 V6.5 L12.5 7.5 H15.5 V14 H9 V12.5 L7.5 12 V9.5 L9 9.5 L9 8 L11.5 7.5 Z" fill="#30c8f8" stroke="#222" stroke-width="0.9"/></g><path d="M8 1.5 H15 M9.5 0 L8 1.5 L9.5 3 M13.5 0 L15 1.5 L13.5 3" stroke="#111" stroke-width="1.1" fill="none"/><path d="M2 4 L5 7 M5 4 L2 7" stroke="#111" stroke-width="1"/></svg>
<div class="mono" style="left:603px;top:952px">00 00</div>
<div class="a" style="left:0;top:997px;width:1915px;height:20px;background:#f0f0f0;border-top:1px solid #d8d8d8"></div>
<div class="a" style="left:1319px;top:999px;width:1px;height:18px;background:#d6d6d6"></div>
<div class="a" style="left:1535px;top:999px;width:1px;height:18px;background:#d6d6d6"></div>
<div class="a" style="left:1634px;top:999px;width:1px;height:18px;background:#d6d6d6"></div>
<div class="a" style="left:1750px;top:999px;width:1px;height:18px;background:#d6d6d6"></div>
<div class="a" style="left:1875px;top:999px;width:1px;height:18px;background:#d6d6d6"></div>
<div class="t" style="left:1236.3px;top:1003px;font-size:15px;letter-spacing:0.697px;color:#1e1e1e">Administrat</div>
<div class="t" style="left:1324.8px;top:1003px;font-size:15px;letter-spacing:0.445px;color:#1e1e1e">Status</div>
<div class="t" style="left:1377.7px;top:1003px;font-size:15px;letter-spacing:0.916px;color:#1e1e1e">Stopped</div>
<div class="t" style="left:1649.7px;top:1003px;font-size:15px;letter-spacing:-0.596px;color:#1e1e1e">Chs</div>
<div class="t" style="left:1765.7px;top:1003px;font-size:15px;letter-spacing:0.543px;color:#1e1e1e">Com</div>
<div class="a" style="left:1878px;top:1001px;width:13px;height:13px;border-radius:50%;background:radial-gradient(circle at 30% 30%,#8a8a8a,#303030 55%,#0a0a0a)"></div>
<div class="a" style="left:1899px;top:1001px;width:13px;height:13px;border-radius:50%;background:radial-gradient(circle at 30% 30%,#8a8a8a,#303030 55%,#0a0a0a)"></div>
</body></html>
